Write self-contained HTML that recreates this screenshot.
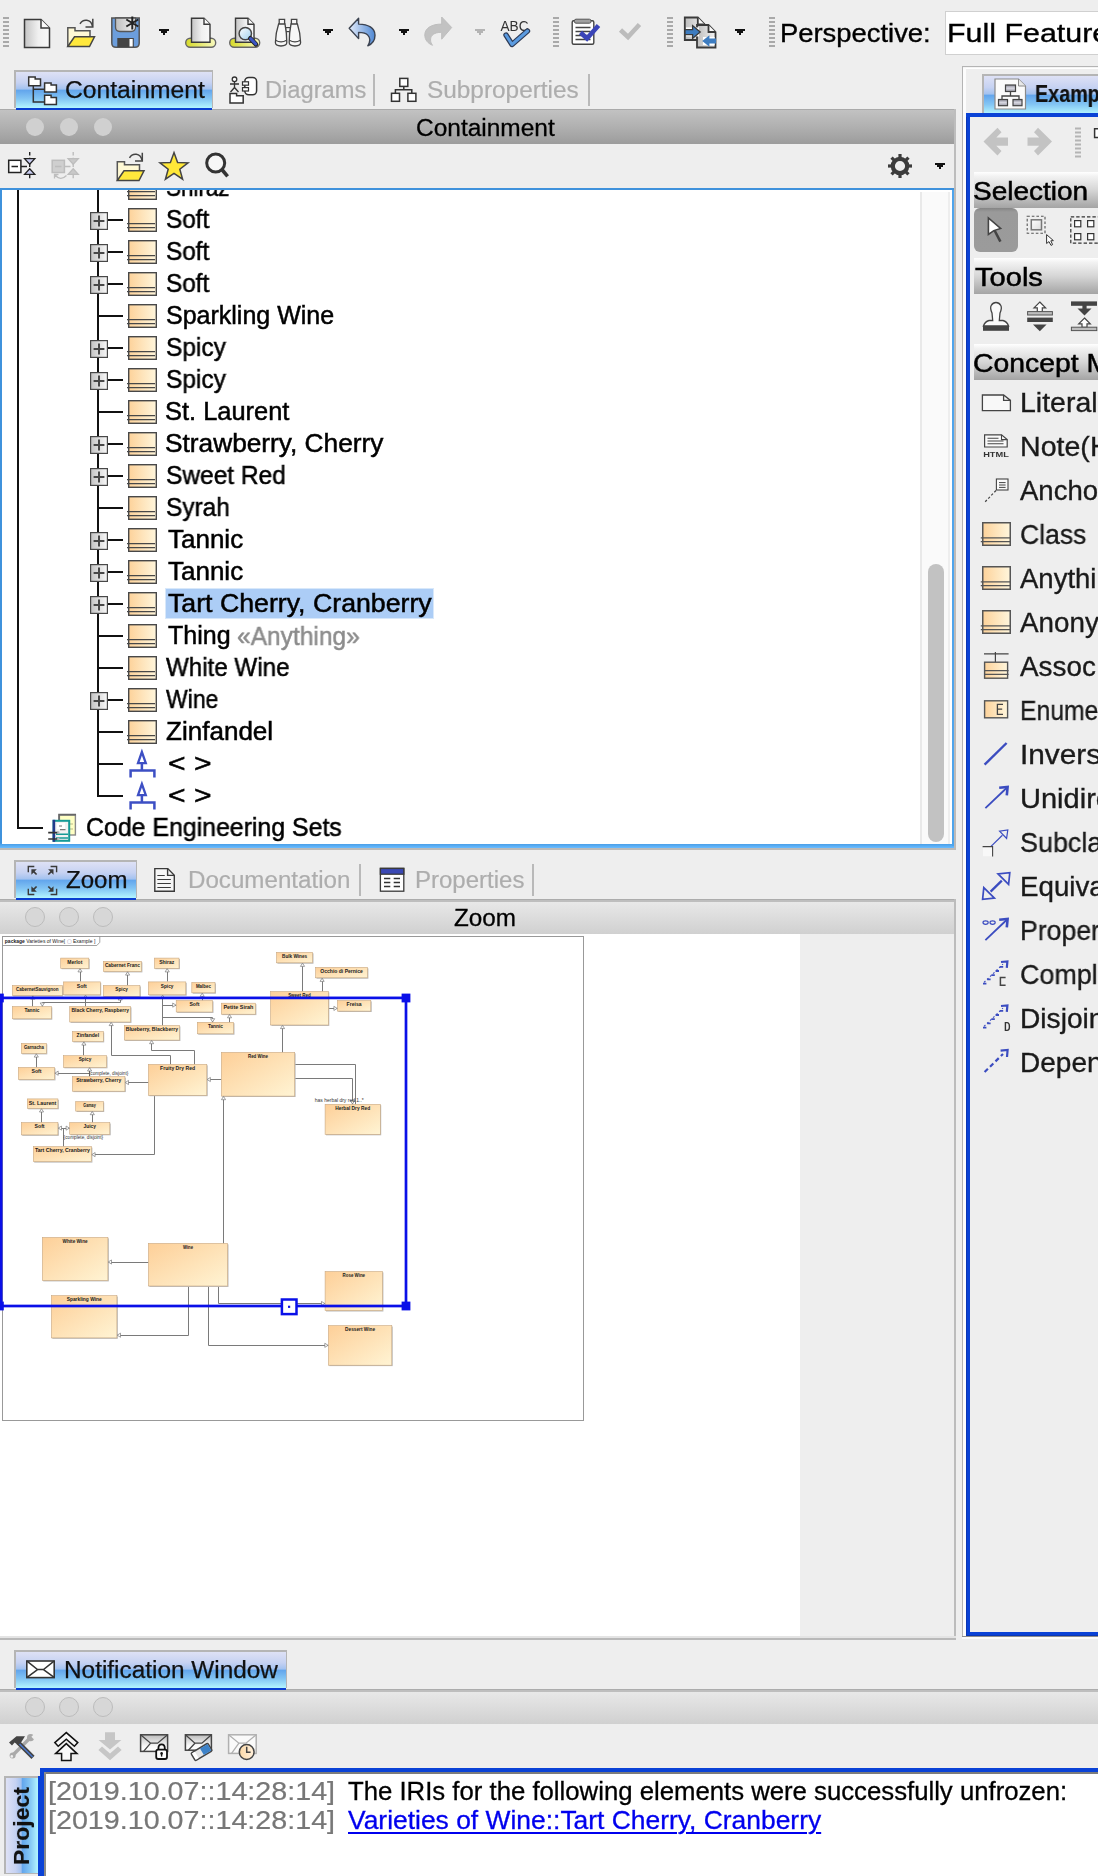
<!DOCTYPE html>
<html><head><meta charset="utf-8"><title>UI</title>
<style>
html,body{margin:0;padding:0;}
body{width:1098px;height:1876px;background:#eeeeee;position:relative;overflow:hidden;font-family:"Liberation Sans",sans-serif;}
.b{position:absolute;box-sizing:border-box;display:block;}
.t{position:absolute;white-space:pre;font-family:"Liberation Sans",sans-serif;-webkit-text-stroke:0.5px;transform-origin:0 0;will-change:transform;}
svg{overflow:visible;}
</style></head><body>
<div class="b" style="left:3px;top:17px;width:6px;height:2px;background:#a9a9a9;"></div>
<div class="b" style="left:3px;top:21px;width:6px;height:2px;background:#a9a9a9;"></div>
<div class="b" style="left:3px;top:25px;width:6px;height:2px;background:#a9a9a9;"></div>
<div class="b" style="left:3px;top:29px;width:6px;height:2px;background:#a9a9a9;"></div>
<div class="b" style="left:3px;top:33px;width:6px;height:2px;background:#a9a9a9;"></div>
<div class="b" style="left:3px;top:37px;width:6px;height:2px;background:#a9a9a9;"></div>
<div class="b" style="left:3px;top:41px;width:6px;height:2px;background:#a9a9a9;"></div>
<div class="b" style="left:3px;top:45px;width:6px;height:2px;background:#a9a9a9;"></div>
<div class="b" style="left:553px;top:17px;width:6px;height:2px;background:#a9a9a9;"></div>
<div class="b" style="left:553px;top:21px;width:6px;height:2px;background:#a9a9a9;"></div>
<div class="b" style="left:553px;top:25px;width:6px;height:2px;background:#a9a9a9;"></div>
<div class="b" style="left:553px;top:29px;width:6px;height:2px;background:#a9a9a9;"></div>
<div class="b" style="left:553px;top:33px;width:6px;height:2px;background:#a9a9a9;"></div>
<div class="b" style="left:553px;top:37px;width:6px;height:2px;background:#a9a9a9;"></div>
<div class="b" style="left:553px;top:41px;width:6px;height:2px;background:#a9a9a9;"></div>
<div class="b" style="left:553px;top:45px;width:6px;height:2px;background:#a9a9a9;"></div>
<div class="b" style="left:667px;top:17px;width:6px;height:2px;background:#a9a9a9;"></div>
<div class="b" style="left:667px;top:21px;width:6px;height:2px;background:#a9a9a9;"></div>
<div class="b" style="left:667px;top:25px;width:6px;height:2px;background:#a9a9a9;"></div>
<div class="b" style="left:667px;top:29px;width:6px;height:2px;background:#a9a9a9;"></div>
<div class="b" style="left:667px;top:33px;width:6px;height:2px;background:#a9a9a9;"></div>
<div class="b" style="left:667px;top:37px;width:6px;height:2px;background:#a9a9a9;"></div>
<div class="b" style="left:667px;top:41px;width:6px;height:2px;background:#a9a9a9;"></div>
<div class="b" style="left:667px;top:45px;width:6px;height:2px;background:#a9a9a9;"></div>
<div class="b" style="left:769px;top:17px;width:6px;height:2px;background:#a9a9a9;"></div>
<div class="b" style="left:769px;top:21px;width:6px;height:2px;background:#a9a9a9;"></div>
<div class="b" style="left:769px;top:25px;width:6px;height:2px;background:#a9a9a9;"></div>
<div class="b" style="left:769px;top:29px;width:6px;height:2px;background:#a9a9a9;"></div>
<div class="b" style="left:769px;top:33px;width:6px;height:2px;background:#a9a9a9;"></div>
<div class="b" style="left:769px;top:37px;width:6px;height:2px;background:#a9a9a9;"></div>
<div class="b" style="left:769px;top:41px;width:6px;height:2px;background:#a9a9a9;"></div>
<div class="b" style="left:769px;top:45px;width:6px;height:2px;background:#a9a9a9;"></div>
<div class="b" style="left:159px;top:29px;width:10px;height:2px;background:#111;"></div>
<div class="b" style="left:161px;top:31px;width:6px;height:2px;background:#111;"></div>
<div class="b" style="left:163px;top:33px;width:2px;height:2px;background:#111;"></div>
<div class="b" style="left:323px;top:29px;width:10px;height:2px;background:#111;"></div>
<div class="b" style="left:325px;top:31px;width:6px;height:2px;background:#111;"></div>
<div class="b" style="left:327px;top:33px;width:2px;height:2px;background:#111;"></div>
<div class="b" style="left:399px;top:29px;width:10px;height:2px;background:#111;"></div>
<div class="b" style="left:401px;top:31px;width:6px;height:2px;background:#111;"></div>
<div class="b" style="left:403px;top:33px;width:2px;height:2px;background:#111;"></div>
<div class="b" style="left:475px;top:29px;width:10px;height:2px;background:#b4b4b4;"></div>
<div class="b" style="left:477px;top:31px;width:6px;height:2px;background:#b4b4b4;"></div>
<div class="b" style="left:479px;top:33px;width:2px;height:2px;background:#b4b4b4;"></div>
<div class="b" style="left:735px;top:29px;width:10px;height:2px;background:#111;"></div>
<div class="b" style="left:737px;top:31px;width:6px;height:2px;background:#111;"></div>
<div class="b" style="left:739px;top:33px;width:2px;height:2px;background:#111;"></div>
<span class="t" style="left:779.68px;top:21px;font-size:25.3px;line-height:25.3px;color:#000;transform:scaleX(1.0827);-webkit-text-stroke:0.35px;">Perspective:</span>
<div class="b" style="left:944.5px;top:11px;width:160px;height:43.6px;background:#fff;border:1px solid #d0d0d0;"></div>
<span class="t" style="left:947.47px;top:21px;font-size:25.3px;line-height:25.3px;color:#000;transform:scaleX(1.2023);-webkit-text-stroke:0.35px;">Full Featured</span>
<div class="b" style="left:0px;top:109px;width:955px;height:1px;background:#aaaaaa;"></div>
<div class="b" style="left:0px;top:110px;width:955px;height:34px;background:linear-gradient(to bottom,#c2c2c2 0%,#b0b0b0 50%,#9c9c9c 100%);"></div>
<div class="b" style="left:14px;top:70px;width:199.4px;height:38px;background:#b5b5b5;"></div>
<div class="b" style="left:16px;top:72px;width:196.4px;height:36px;background:linear-gradient(to bottom,#dee1f5 0%,#c6d2f2 30%,#a3c2ef 47.5%,#62a5ec 50.5%,#84c6f4 75%,#b4f6ff 100%);"></div>
<div class="b" style="left:16px;top:108px;width:196.4px;height:2px;background:#0a3fd0;"></div>
<span class="t" style="left:65.01px;top:79px;font-size:23.5px;line-height:23.5px;color:#111;transform:scaleX(1.0488);-webkit-text-stroke:0.25px;">Containment</span>
<span class="t" style="left:265.34px;top:79px;font-size:23.5px;line-height:23.5px;color:#adadad;transform:scaleX(1.0079);-webkit-text-stroke:0.2px;">Diagrams</span>
<div class="b" style="left:373px;top:74px;width:2px;height:32px;background:#b9b9b9;"></div>
<span class="t" style="left:427.03px;top:79px;font-size:23.5px;line-height:23.5px;color:#adadad;transform:scaleX(1.0369);-webkit-text-stroke:0.2px;">Subproperties</span>
<div class="b" style="left:588px;top:74px;width:2px;height:32px;background:#b9b9b9;"></div>
<div class="b" style="left:26px;top:118px;width:18px;height:18px;background:#d0d0d0;border-radius:50%;"></div>
<div class="b" style="left:60px;top:118px;width:18px;height:18px;background:#d0d0d0;border-radius:50%;"></div>
<div class="b" style="left:94px;top:118px;width:18px;height:18px;background:#d0d0d0;border-radius:50%;"></div>
<span class="t" style="left:415.72px;top:117px;font-size:23.5px;line-height:23.5px;color:#000;transform:scaleX(1.0412);-webkit-text-stroke:0.3px;">Containment</span>
<div class="b" style="left:954px;top:109px;width:2px;height:740px;background:#bdbdbd;"></div>
<svg class="b" style="left:0;top:0" width="1098" height="200" viewBox="0 0 1098 200"><defs>
<linearGradient id="pgG" x1="0" x2="1" y1="0" y2="0"><stop offset="0" stop-color="#c4c4c4"/><stop offset="0.55" stop-color="#f0f0f0"/><stop offset="1" stop-color="#f8f8f8"/></linearGradient>
<linearGradient id="ylG" x1="0" x2="1" y1="0" y2="0"><stop offset="0" stop-color="#d6da28"/><stop offset="1" stop-color="#f8f9c0"/></linearGradient>
<linearGradient id="unG" x1="0" x2="1" y1="0" y2="0"><stop offset="0" stop-color="#e4ecfa"/><stop offset="1" stop-color="#4f88d4"/></linearGradient>
<linearGradient id="mgG" x1="0" x2="1" y1="0" y2="1"><stop offset="0" stop-color="#ffffff"/><stop offset="1" stop-color="#9fd0ee"/></linearGradient>
<linearGradient id="flG" x1="0" x2="1" y1="0" y2="0"><stop offset="0" stop-color="#bdbdbd"/><stop offset="1" stop-color="#f4f4f4"/></linearGradient>
</defs><path d="M24.5 19.5 H41.0 L49.5 28.0 V47.5 H24.5 Z" fill="url(#pgG)" stroke="#3a3a3a" stroke-width="1.5" stroke-linejoin="miter"/><path d="M41.0 19.5 V28.0 H49.5" fill="#fafafa" stroke="#3a3a3a" stroke-width="1.5" stroke-linejoin="miter"/><path d="M67.8 46.5 V27.8 H75 V30.8 H90 V36.8" fill="#fff9d4" stroke="#555" stroke-width="1.5"/><path d="M67.8 46.5 L74.5 36.8 H94.5 L89.5 46.5 Z" fill="#ffe83c" stroke="#444" stroke-width="1.5" stroke-linejoin="miter"/><path d="M80 23.8 C83 18.8 91 18.8 92.5 26.3" fill="none" stroke="#444" stroke-width="1.5"/><path d="M92.8 18.8 V27.1 H85.5" fill="none" stroke="#444" stroke-width="1.5"/><path d="M111.8 18 H139.2 V43 Q139.2 47.3 135 47.3 H116 Q111.8 47.3 111.8 43 Z" fill="#6c9edc" stroke="#555" stroke-width="1.5"/><path d="M115.5 18 H135.5 V27 Q135.5 31.5 131 31.5 H120 Q115.5 31.5 115.5 27 Z" fill="url(#flG)" stroke="#555" stroke-width="1.3"/><rect x="117.3" y="38" width="16.5" height="9" fill="#444"/><rect x="129.5" y="39" width="3.2" height="7.5" fill="#fff"/><path d="M132.3 16.5 V29.5 M126.3 19.5 L138.3 26.5 M138.3 19.5 L126.3 26.5" stroke="#222" stroke-width="2" fill="none"/><rect x="185.7" y="38.3" width="30" height="9" rx="4.5" fill="url(#ylG)" stroke="#666" stroke-width="1.4"/><path d="M191.5 18.3 H204.0 L210.0 24.3 V42.3 H191.5 Z" fill="url(#pgG)" stroke="#3a3a3a" stroke-width="1.4" stroke-linejoin="miter"/><path d="M204.0 18.3 V24.3 H210.0" fill="#fafafa" stroke="#3a3a3a" stroke-width="1.4" stroke-linejoin="miter"/><rect x="229.7" y="38.3" width="30" height="9" rx="4.5" fill="url(#ylG)" stroke="#666" stroke-width="1.4"/><path d="M235.5 18.3 H248.0 L254.0 24.3 V42.3 H235.5 Z" fill="url(#pgG)" stroke="#3a3a3a" stroke-width="1.4" stroke-linejoin="miter"/><path d="M248.0 18.3 V24.3 H254.0" fill="#fafafa" stroke="#3a3a3a" stroke-width="1.4" stroke-linejoin="miter"/><circle cx="245.3" cy="33.6" r="6.2" fill="url(#mgG)" stroke="#444" stroke-width="1.5"/><path d="M250.3 38.3 L256 44.3" stroke="#222" stroke-width="4.6" stroke-linecap="round"/><path d="M250.6 38.6 L255.8 44" stroke="#3b55c4" stroke-width="3" stroke-linecap="round"/><rect x="285.6" y="27.6" width="4.8" height="4" fill="#f7f7f7" stroke="#444" stroke-width="1.2"/><path d="M279.2 24 V19.4 H284.6 V24" fill="#f7f7f7" stroke="#444" stroke-width="1.3"/><path d="M278.6 24 H285 Q286.8 33 286.8 42.6 Q286.8 46 281 46 Q275.4 46 275.4 42.6 Q275.6 33 278.6 24 Z" fill="#f7f7f7" stroke="#444" stroke-width="1.3"/><path d="M275.6 40.2 Q281 43.6 286.6 40.2" fill="none" stroke="#444" stroke-width="1.2"/><path d="M296.8 24 V19.4 H291.4 V24" fill="#f7f7f7" stroke="#444" stroke-width="1.3"/><path d="M297.4 24 H291 Q289.2 33 289.2 42.6 Q289.2 46 295 46 Q300.6 46 300.6 42.6 Q300.4 33 297.4 24 Z" fill="#f7f7f7" stroke="#444" stroke-width="1.3"/><path d="M300.4 40.2 Q295 43.6 289.4 40.2" fill="none" stroke="#444" stroke-width="1.2"/><path d="M349.2 28.2 L358.6 18.2 V24.1 C368 24 375 28 375 35.2 C375 40 372 44 367.8 45.8 C370.2 42 370.4 38 368 35.4 C366 33 362 32.4 358.6 32.4 V38.6 Z" fill="url(#unG)" stroke="#3b4250" stroke-width="1.4" stroke-linejoin="round"/><path d="M451.7 27.5 L441.7 17 V24.1 C432 24 424.8 28 424.8 35 C424.8 40 428 43.5 432.5 45.3 C430 42 430 38 432 35.5 C434 33 438 32.3 441.7 32.3 V39.2 Z" fill="#c2c2c2" stroke="#bdbdbd" stroke-width="1"/><text x="500.5" y="31" font-family="Liberation Sans, sans-serif" font-size="14.5" fill="#333" textLength="28" lengthAdjust="spacingAndGlyphs">ABC</text><path d="M506 35 L512 44.5 L527.5 31" fill="none" stroke="#2d3a55" stroke-width="5.4" stroke-linejoin="round" stroke-linecap="round"/><path d="M506 35 L512 44.5 L527.5 31" fill="none" stroke="#5b9be0" stroke-width="3" stroke-linejoin="round" stroke-linecap="round"/><rect x="572.2" y="20.8" width="21.6" height="23.4" rx="1.5" fill="#fff" stroke="#444" stroke-width="1.4"/><rect x="574.4" y="19.2" width="16.6" height="4" rx="1.6" fill="#a0a0a0" stroke="#555" stroke-width="1"/><path d="M575.5 27.5 H590.5 M575.5 31.5 H590.5 M575.5 35.5 H590.5 M575.5 39.5 H590.5" stroke="#444" stroke-width="1.3"/><path d="M580.5 32.5 L587 38.5 L598.5 25.5" fill="none" stroke="#3a44b8" stroke-width="4.6"/><path d="M620.5 30 L628 37 L639.5 24.5" fill="none" stroke="#bcbcbc" stroke-width="4.6"/><path d="M684.8 17.5 H697.8 L704.8 24.5 V40.0 H684.8 Z" fill="url(#flG)" stroke="#3a3a3a" stroke-width="1.8" stroke-linejoin="miter"/><path d="M697.8 17.5 V24.5 H704.8" fill="#fafafa" stroke="#3a3a3a" stroke-width="1.8" stroke-linejoin="miter"/><path d="M697 25 H708.5 L715.5 32 V47.5 H697 Z" fill="url(#flG)" stroke="#3a3a3a" stroke-width="1.8" stroke-linejoin="miter"/><path d="M708.5 25 V32 H715.5" fill="#fafafa" stroke="#3a3a3a" stroke-width="1.8" stroke-linejoin="miter"/><rect x="686" y="27.4" width="13" height="9" fill="#fff"/><rect x="703" y="37" width="11.6" height="8" fill="#fff"/><path d="M685 29.6 H692.6 V25.6 L700.2 32 L692.6 38.4 V34.6 H685 Z" fill="#3d7cc0" stroke="#3a3a3a" stroke-width="1.3" stroke-linejoin="miter"/><path d="M716 38.6 H709.4 V35.2 L702.2 41 L709.4 46.8 V43.6 H716 Z" fill="#3d7cc0" stroke="none"/><path d="M33.3 86 V101.9 H44.3 M33.3 89.3 H44.3" fill="none" stroke="#333" stroke-width="1.5"/><path d="M28.7 85.7 V76.9 H35.19 V79.10000000000001 H40.5 V85.7 Z" fill="#fff" stroke="#333" stroke-width="1.5" stroke-linejoin="miter"/><path d="M44.6 92.10000000000001 V82.9 H51.09 V85.10000000000001 H56.400000000000006 V92.10000000000001 Z" fill="#fff" stroke="#333" stroke-width="1.5" stroke-linejoin="miter"/><path d="M44.6 104.4 V95.2 H51.09 V97.4 H56.400000000000006 V104.4 Z" fill="#fff" stroke="#333" stroke-width="1.5" stroke-linejoin="miter"/><rect x="244.8" y="77.4" width="11.8" height="17.4" rx="4" fill="#fff" stroke="#333" stroke-width="1.5"/><rect x="242.5" y="81.8" width="6" height="3.4" fill="#fff" stroke="#333" stroke-width="1.2"/><rect x="242.5" y="87.6" width="6" height="3.4" fill="#fff" stroke="#333" stroke-width="1.2"/><circle cx="234.5" cy="79.3" r="2.3" fill="#fff" stroke="#333" stroke-width="1.3"/><path d="M234.5 81.8 V87.5 M230 84 H239 M234.5 87.5 L230.5 92 M234.5 87.5 L238.5 92" fill="none" stroke="#333" stroke-width="1.3"/><path d="M230 103.0 V93.4 H236.6 V95.80000000000001 H243.2 V103.0 Z" fill="#fff" stroke="#333" stroke-width="1.5" stroke-linejoin="miter"/><path d="M403.8 86.5 V89.8 M395.4 93 V89.8 H411.8 V93" fill="none" stroke="#333" stroke-width="1.5"/><rect x="399.8" y="78.4" width="8" height="8" fill="#fff" stroke="#333" stroke-width="1.5"/><rect x="391.5" y="93.3" width="8" height="8" fill="#fff" stroke="#333" stroke-width="1.5"/><rect x="407.9" y="93.3" width="8" height="8" fill="#fff" stroke="#333" stroke-width="1.5"/><path d="M29.7 152 V180.5" stroke="#222" stroke-width="1.4" stroke-dasharray="3.5 2.2" fill="none"/><rect x="8.7" y="160.3" width="12.2" height="12.2" fill="#fff" stroke="#222" stroke-width="1.5"/><path d="M11.5 166.4 H18 M21 166.4 H27" stroke="#222" stroke-width="1.5"/><path d="M24.6 158.6 H34.8 L29.7 164.2 Z M24.6 174.3 H34.8 L29.7 168.7 Z" fill="#c8ccf0" stroke="#222" stroke-width="1.3" stroke-linejoin="miter"/><path d="M73.2 152 V180.5" stroke="#bdbdbd" stroke-width="1.4" stroke-dasharray="3.5 2.2" fill="none"/><rect x="52.2" y="160.3" width="12.2" height="12.2" fill="#cfcfcf" stroke="#bdbdbd" stroke-width="1.5"/><path d="M55.0 166.4 H61.5 M64.5 166.4 H70.5" stroke="#bdbdbd" stroke-width="1.5"/><path d="M68.1 158.6 H78.3 L73.2 164.2 Z M68.1 174.3 H78.3 L73.2 168.7 Z" fill="#c9c9c9" stroke="#bdbdbd" stroke-width="1.3" stroke-linejoin="miter"/><path d="M55.0 175 Q60.5 181.5 66.5 175.5 M54.5 178.5 V174.5 H58.5" fill="none" stroke="#bdbdbd" stroke-width="1.3"/><path d="M117.3 180.5 V161.8 H124.5 V164.8 H139.5 V170.8" fill="#fff9d4" stroke="#555" stroke-width="1.5"/><path d="M117.3 180.5 L124.0 170.8 H144.0 L139.0 180.5 Z" fill="#ffe83c" stroke="#444" stroke-width="1.5" stroke-linejoin="miter"/><path d="M129.5 157.8 C132.5 152.8 140.5 152.8 142.0 160.3" fill="none" stroke="#444" stroke-width="1.5"/><path d="M142.3 152.8 V161.10000000000002 H135.0" fill="none" stroke="#444" stroke-width="1.5"/><polygon points="174.0,152.6 177.6,162.4 188.0,162.8 179.8,169.2 182.6,179.2 174.0,173.4 165.4,179.2 168.2,169.2 160.0,162.8 170.4,162.4" fill="#ffe838" stroke="#444" stroke-width="1.5" stroke-linejoin="miter"/><circle cx="215.7" cy="163" r="9" fill="#f7f7f7" stroke="#333" stroke-width="3"/><path d="M222.3 170 L227.6 176.3" stroke="#333" stroke-width="3.6" stroke-linecap="butt"/><circle cx="900" cy="166" r="7.2" fill="none" stroke="#3c3c3c" stroke-width="4.2"/><rect x="898.4" y="154" width="3.2" height="4" fill="#3c3c3c" transform="rotate(0 900 166)"/><rect x="898.4" y="154" width="3.2" height="4" fill="#3c3c3c" transform="rotate(45 900 166)"/><rect x="898.4" y="154" width="3.2" height="4" fill="#3c3c3c" transform="rotate(90 900 166)"/><rect x="898.4" y="154" width="3.2" height="4" fill="#3c3c3c" transform="rotate(135 900 166)"/><rect x="898.4" y="154" width="3.2" height="4" fill="#3c3c3c" transform="rotate(180 900 166)"/><rect x="898.4" y="154" width="3.2" height="4" fill="#3c3c3c" transform="rotate(225 900 166)"/><rect x="898.4" y="154" width="3.2" height="4" fill="#3c3c3c" transform="rotate(270 900 166)"/><rect x="898.4" y="154" width="3.2" height="4" fill="#3c3c3c" transform="rotate(315 900 166)"/></svg>
<div class="b" style="left:935px;top:163px;width:10px;height:2px;background:#111;"></div>
<div class="b" style="left:937px;top:165px;width:6px;height:2px;background:#111;"></div>
<div class="b" style="left:939px;top:167px;width:2px;height:2px;background:#111;"></div>
<div class="b" style="left:0px;top:188px;width:956px;height:662px;background:#bcbab8;"></div>
<div class="b" style="left:0px;top:188px;width:954.2px;height:660px;background:linear-gradient(to bottom,#3f92dc 0,#3f92dc 655px,#4a9fe8 656px,#6abcff 660px);"></div>
<div class="b" style="left:952px;top:190px;width:2.2px;height:656px;background:#4ea4ec;"></div>
<div class="b" style="left:2px;top:190px;width:950px;height:654px;background:#fff;"></div>
<div class="b" style="left:920px;top:192px;width:30px;height:652px;background:#fafafa;"></div>
<div class="b" style="left:920px;top:192px;width:2px;height:652px;background:#e9e9e9;"></div>
<div class="b" style="left:948px;top:192px;width:2px;height:652px;background:#eeeeee;"></div>
<div class="b" style="left:928px;top:564px;width:16px;height:278px;background:#c2c2c2;border-radius:8px;"></div>
<div class="b" style="left:17px;top:190px;width:2.4px;height:638.8px;background:#111;"></div>
<div class="b" style="left:17px;top:826.5px;width:26px;height:2.3px;background:#111;"></div>
<div class="b" style="left:97px;top:190px;width:2px;height:607px;background:#111;"></div>
<svg width="0" height="0" style="position:absolute"><defs><linearGradient id="cg" x1="0" x2="1" y1="0" y2="0"><stop offset="0" stop-color="#fdd29a"/><stop offset="1" stop-color="#fff6dc"/></linearGradient></defs></svg>
<div class="b" style="left:2px;top:190px;width:918px;height:654px;overflow:hidden"><div style="position:absolute;left:-2px;top:-190px">
<div class="b" style="left:99px;top:187px;width:24px;height:2px;background:#111;"></div>
<svg class="b" style="left:127px;top:176px" width="31" height="24" viewBox="-1 0 31 24"><rect x="0.7" y="0.7" width="27.6" height="22.6" fill="url(#cg)" stroke="#484848" stroke-width="1.4"/><path d="M-1 15.6 H27 M-1 19.6 H27" stroke="#484848" stroke-width="1.3" fill="none"/></svg>
<span class="t" style="left:165.60px;top:175px;font-size:25px;line-height:25px;color:#000;transform:scaleX(0.8958);">Shiraz</span>
<div class="b" style="left:108px;top:219px;width:15px;height:2px;background:#111;"></div>
<svg class="b" style="left:127px;top:208px" width="31" height="24" viewBox="-1 0 31 24"><rect x="0.7" y="0.7" width="27.6" height="22.6" fill="url(#cg)" stroke="#484848" stroke-width="1.4"/><path d="M-1 15.6 H27 M-1 19.6 H27" stroke="#484848" stroke-width="1.3" fill="none"/></svg>
<span class="t" style="left:165.53px;top:207px;font-size:25px;line-height:25px;color:#000;transform:scaleX(0.9715);">Soft</span>
<div class="b" style="left:108px;top:251px;width:15px;height:2px;background:#111;"></div>
<svg class="b" style="left:127px;top:240px" width="31" height="24" viewBox="-1 0 31 24"><rect x="0.7" y="0.7" width="27.6" height="22.6" fill="url(#cg)" stroke="#484848" stroke-width="1.4"/><path d="M-1 15.6 H27 M-1 19.6 H27" stroke="#484848" stroke-width="1.3" fill="none"/></svg>
<span class="t" style="left:165.53px;top:239px;font-size:25px;line-height:25px;color:#000;transform:scaleX(0.9715);">Soft</span>
<div class="b" style="left:108px;top:283px;width:15px;height:2px;background:#111;"></div>
<svg class="b" style="left:127px;top:272px" width="31" height="24" viewBox="-1 0 31 24"><rect x="0.7" y="0.7" width="27.6" height="22.6" fill="url(#cg)" stroke="#484848" stroke-width="1.4"/><path d="M-1 15.6 H27 M-1 19.6 H27" stroke="#484848" stroke-width="1.3" fill="none"/></svg>
<span class="t" style="left:165.53px;top:271px;font-size:25px;line-height:25px;color:#000;transform:scaleX(0.9715);">Soft</span>
<div class="b" style="left:99px;top:315px;width:24px;height:2px;background:#111;"></div>
<svg class="b" style="left:127px;top:304px" width="31" height="24" viewBox="-1 0 31 24"><rect x="0.7" y="0.7" width="27.6" height="22.6" fill="url(#cg)" stroke="#484848" stroke-width="1.4"/><path d="M-1 15.6 H27 M-1 19.6 H27" stroke="#484848" stroke-width="1.3" fill="none"/></svg>
<span class="t" style="left:165.50px;top:303px;font-size:25px;line-height:25px;color:#000;">Sparkling Wine</span>
<div class="b" style="left:108px;top:347px;width:15px;height:2px;background:#111;"></div>
<svg class="b" style="left:127px;top:336px" width="31" height="24" viewBox="-1 0 31 24"><rect x="0.7" y="0.7" width="27.6" height="22.6" fill="url(#cg)" stroke="#484848" stroke-width="1.4"/><path d="M-1 15.6 H27 M-1 19.6 H27" stroke="#484848" stroke-width="1.3" fill="none"/></svg>
<span class="t" style="left:165.52px;top:335px;font-size:25px;line-height:25px;color:#000;transform:scaleX(0.9769);">Spicy</span>
<div class="b" style="left:108px;top:379px;width:15px;height:2px;background:#111;"></div>
<svg class="b" style="left:127px;top:368px" width="31" height="24" viewBox="-1 0 31 24"><rect x="0.7" y="0.7" width="27.6" height="22.6" fill="url(#cg)" stroke="#484848" stroke-width="1.4"/><path d="M-1 15.6 H27 M-1 19.6 H27" stroke="#484848" stroke-width="1.3" fill="none"/></svg>
<span class="t" style="left:165.52px;top:367px;font-size:25px;line-height:25px;color:#000;transform:scaleX(0.9769);">Spicy</span>
<div class="b" style="left:99px;top:411px;width:24px;height:2px;background:#111;"></div>
<svg class="b" style="left:127px;top:400px" width="31" height="24" viewBox="-1 0 31 24"><rect x="0.7" y="0.7" width="27.6" height="22.6" fill="url(#cg)" stroke="#484848" stroke-width="1.4"/><path d="M-1 15.6 H27 M-1 19.6 H27" stroke="#484848" stroke-width="1.3" fill="none"/></svg>
<span class="t" style="left:165.48px;top:399px;font-size:25px;line-height:25px;color:#000;transform:scaleX(1.0167);">St. Laurent</span>
<div class="b" style="left:108px;top:443px;width:15px;height:2px;background:#111;"></div>
<svg class="b" style="left:127px;top:432px" width="31" height="24" viewBox="-1 0 31 24"><rect x="0.7" y="0.7" width="27.6" height="22.6" fill="url(#cg)" stroke="#484848" stroke-width="1.4"/><path d="M-1 15.6 H27 M-1 19.6 H27" stroke="#484848" stroke-width="1.3" fill="none"/></svg>
<span class="t" style="left:165.45px;top:431px;font-size:25px;line-height:25px;color:#000;transform:scaleX(1.0506);">Strawberry, Cherry</span>
<div class="b" style="left:108px;top:475px;width:15px;height:2px;background:#111;"></div>
<svg class="b" style="left:127px;top:464px" width="31" height="24" viewBox="-1 0 31 24"><rect x="0.7" y="0.7" width="27.6" height="22.6" fill="url(#cg)" stroke="#484848" stroke-width="1.4"/><path d="M-1 15.6 H27 M-1 19.6 H27" stroke="#484848" stroke-width="1.3" fill="none"/></svg>
<span class="t" style="left:165.52px;top:463px;font-size:25px;line-height:25px;color:#000;transform:scaleX(0.9791);">Sweet Red</span>
<div class="b" style="left:99px;top:507px;width:24px;height:2px;background:#111;"></div>
<svg class="b" style="left:127px;top:496px" width="31" height="24" viewBox="-1 0 31 24"><rect x="0.7" y="0.7" width="27.6" height="22.6" fill="url(#cg)" stroke="#484848" stroke-width="1.4"/><path d="M-1 15.6 H27 M-1 19.6 H27" stroke="#484848" stroke-width="1.3" fill="none"/></svg>
<span class="t" style="left:165.52px;top:495px;font-size:25px;line-height:25px;color:#000;transform:scaleX(0.9757);">Syrah</span>
<div class="b" style="left:108px;top:539px;width:15px;height:2px;background:#111;"></div>
<svg class="b" style="left:127px;top:528px" width="31" height="24" viewBox="-1 0 31 24"><rect x="0.7" y="0.7" width="27.6" height="22.6" fill="url(#cg)" stroke="#484848" stroke-width="1.4"/><path d="M-1 15.6 H27 M-1 19.6 H27" stroke="#484848" stroke-width="1.3" fill="none"/></svg>
<span class="t" style="left:167.74px;top:527px;font-size:25px;line-height:25px;color:#000;transform:scaleX(1.0398);">Tannic</span>
<div class="b" style="left:108px;top:571px;width:15px;height:2px;background:#111;"></div>
<svg class="b" style="left:127px;top:560px" width="31" height="24" viewBox="-1 0 31 24"><rect x="0.7" y="0.7" width="27.6" height="22.6" fill="url(#cg)" stroke="#484848" stroke-width="1.4"/><path d="M-1 15.6 H27 M-1 19.6 H27" stroke="#484848" stroke-width="1.3" fill="none"/></svg>
<span class="t" style="left:167.74px;top:559px;font-size:25px;line-height:25px;color:#000;transform:scaleX(1.0398);">Tannic</span>
<div class="b" style="left:108px;top:603px;width:15px;height:2px;background:#111;"></div>
<svg class="b" style="left:127px;top:592px" width="31" height="24" viewBox="-1 0 31 24"><rect x="0.7" y="0.7" width="27.6" height="22.6" fill="url(#cg)" stroke="#484848" stroke-width="1.4"/><path d="M-1 15.6 H27 M-1 19.6 H27" stroke="#484848" stroke-width="1.3" fill="none"/></svg>
<div class="b" style="left:165px;top:588px;width:269px;height:31px;background:#accdf6;border:1px solid #d8e8fa;"></div>
<span class="t" style="left:167.73px;top:591px;font-size:25px;line-height:25px;color:#000;transform:scaleX(1.0684);">Tart Cherry, Cranberry</span>
<div class="b" style="left:99px;top:635px;width:24px;height:2px;background:#111;"></div>
<svg class="b" style="left:127px;top:624px" width="31" height="24" viewBox="-1 0 31 24"><rect x="0.7" y="0.7" width="27.6" height="22.6" fill="url(#cg)" stroke="#484848" stroke-width="1.4"/><path d="M-1 15.6 H27 M-1 19.6 H27" stroke="#484848" stroke-width="1.3" fill="none"/></svg>
<span class="t" style="left:167.75px;top:623px;font-size:25px;line-height:25px;color:#000;">Thing</span>
<span class="t" style="left:237.02px;top:624px;font-size:25px;line-height:25px;color:#8c8c8c;transform:scaleX(0.9811);">«Anything»</span>
<div class="b" style="left:99px;top:667px;width:24px;height:2px;background:#111;"></div>
<svg class="b" style="left:127px;top:656px" width="31" height="24" viewBox="-1 0 31 24"><rect x="0.7" y="0.7" width="27.6" height="22.6" fill="url(#cg)" stroke="#484848" stroke-width="1.4"/><path d="M-1 15.6 H27 M-1 19.6 H27" stroke="#484848" stroke-width="1.3" fill="none"/></svg>
<span class="t" style="left:166.26px;top:655px;font-size:25px;line-height:25px;color:#000;transform:scaleX(0.9661);">White Wine</span>
<div class="b" style="left:108px;top:699px;width:15px;height:2px;background:#111;"></div>
<svg class="b" style="left:127px;top:688px" width="31" height="24" viewBox="-1 0 31 24"><rect x="0.7" y="0.7" width="27.6" height="22.6" fill="url(#cg)" stroke="#484848" stroke-width="1.4"/><path d="M-1 15.6 H27 M-1 19.6 H27" stroke="#484848" stroke-width="1.3" fill="none"/></svg>
<span class="t" style="left:166.27px;top:687px;font-size:25px;line-height:25px;color:#000;transform:scaleX(0.9192);">Wine</span>
<div class="b" style="left:99px;top:731px;width:24px;height:2px;background:#111;"></div>
<svg class="b" style="left:127px;top:720px" width="31" height="24" viewBox="-1 0 31 24"><rect x="0.7" y="0.7" width="27.6" height="22.6" fill="url(#cg)" stroke="#484848" stroke-width="1.4"/><path d="M-1 15.6 H27 M-1 19.6 H27" stroke="#484848" stroke-width="1.3" fill="none"/></svg>
<span class="t" style="left:166.24px;top:719px;font-size:25px;line-height:25px;color:#000;transform:scaleX(1.0417);">Zinfandel</span>
<div class="b" style="left:99px;top:763px;width:24px;height:2px;background:#111;"></div>
<svg class="b" style="left:127px;top:748px" width="32" height="32" viewBox="0 0 32 32"><path d="M14.9 4 L11 15.2 H18.8 Z" fill="#fff" stroke="#3d4fc4" stroke-width="2.3" stroke-linejoin="miter"/><path d="M14.9 16 V23.6 M3.6 29.4 V22.4 H27.4 V29.4" fill="none" stroke="#3d4fc4" stroke-width="2.5"/></svg>
<span class="t" style="left:167.70px;top:751px;font-size:25px;line-height:25px;color:#000;transform:scaleX(1.2033);">&lt; &gt;</span>
<div class="b" style="left:99px;top:795px;width:24px;height:2px;background:#111;"></div>
<svg class="b" style="left:127px;top:780px" width="32" height="32" viewBox="0 0 32 32"><path d="M14.9 4 L11 15.2 H18.8 Z" fill="#fff" stroke="#3d4fc4" stroke-width="2.3" stroke-linejoin="miter"/><path d="M14.9 16 V23.6 M3.6 29.4 V22.4 H27.4 V29.4" fill="none" stroke="#3d4fc4" stroke-width="2.5"/></svg>
<span class="t" style="left:167.70px;top:783px;font-size:25px;line-height:25px;color:#000;transform:scaleX(1.2033);">&lt; &gt;</span>
<svg class="b" style="left:90px;top:212px" width="18" height="18" viewBox="0 0 18 18"><defs><linearGradient id="pg" x1="0" x2="1" y1="0" y2="0"><stop offset="0" stop-color="#c4c4c4"/><stop offset="1" stop-color="#f8f8f8"/></linearGradient></defs><rect x="0.6" y="0.6" width="16.8" height="16.8" fill="url(#pg)" stroke="#484848" stroke-width="1.2"/><path d="M3.6 9 H14.4 M9 3.6 V14.4" stroke="#484848" stroke-width="2"/></svg>
<svg class="b" style="left:90px;top:244px" width="18" height="18" viewBox="0 0 18 18"><defs><linearGradient id="pg" x1="0" x2="1" y1="0" y2="0"><stop offset="0" stop-color="#c4c4c4"/><stop offset="1" stop-color="#f8f8f8"/></linearGradient></defs><rect x="0.6" y="0.6" width="16.8" height="16.8" fill="url(#pg)" stroke="#484848" stroke-width="1.2"/><path d="M3.6 9 H14.4 M9 3.6 V14.4" stroke="#484848" stroke-width="2"/></svg>
<svg class="b" style="left:90px;top:276px" width="18" height="18" viewBox="0 0 18 18"><defs><linearGradient id="pg" x1="0" x2="1" y1="0" y2="0"><stop offset="0" stop-color="#c4c4c4"/><stop offset="1" stop-color="#f8f8f8"/></linearGradient></defs><rect x="0.6" y="0.6" width="16.8" height="16.8" fill="url(#pg)" stroke="#484848" stroke-width="1.2"/><path d="M3.6 9 H14.4 M9 3.6 V14.4" stroke="#484848" stroke-width="2"/></svg>
<svg class="b" style="left:90px;top:340px" width="18" height="18" viewBox="0 0 18 18"><defs><linearGradient id="pg" x1="0" x2="1" y1="0" y2="0"><stop offset="0" stop-color="#c4c4c4"/><stop offset="1" stop-color="#f8f8f8"/></linearGradient></defs><rect x="0.6" y="0.6" width="16.8" height="16.8" fill="url(#pg)" stroke="#484848" stroke-width="1.2"/><path d="M3.6 9 H14.4 M9 3.6 V14.4" stroke="#484848" stroke-width="2"/></svg>
<svg class="b" style="left:90px;top:372px" width="18" height="18" viewBox="0 0 18 18"><defs><linearGradient id="pg" x1="0" x2="1" y1="0" y2="0"><stop offset="0" stop-color="#c4c4c4"/><stop offset="1" stop-color="#f8f8f8"/></linearGradient></defs><rect x="0.6" y="0.6" width="16.8" height="16.8" fill="url(#pg)" stroke="#484848" stroke-width="1.2"/><path d="M3.6 9 H14.4 M9 3.6 V14.4" stroke="#484848" stroke-width="2"/></svg>
<svg class="b" style="left:90px;top:436px" width="18" height="18" viewBox="0 0 18 18"><defs><linearGradient id="pg" x1="0" x2="1" y1="0" y2="0"><stop offset="0" stop-color="#c4c4c4"/><stop offset="1" stop-color="#f8f8f8"/></linearGradient></defs><rect x="0.6" y="0.6" width="16.8" height="16.8" fill="url(#pg)" stroke="#484848" stroke-width="1.2"/><path d="M3.6 9 H14.4 M9 3.6 V14.4" stroke="#484848" stroke-width="2"/></svg>
<svg class="b" style="left:90px;top:468px" width="18" height="18" viewBox="0 0 18 18"><defs><linearGradient id="pg" x1="0" x2="1" y1="0" y2="0"><stop offset="0" stop-color="#c4c4c4"/><stop offset="1" stop-color="#f8f8f8"/></linearGradient></defs><rect x="0.6" y="0.6" width="16.8" height="16.8" fill="url(#pg)" stroke="#484848" stroke-width="1.2"/><path d="M3.6 9 H14.4 M9 3.6 V14.4" stroke="#484848" stroke-width="2"/></svg>
<svg class="b" style="left:90px;top:532px" width="18" height="18" viewBox="0 0 18 18"><defs><linearGradient id="pg" x1="0" x2="1" y1="0" y2="0"><stop offset="0" stop-color="#c4c4c4"/><stop offset="1" stop-color="#f8f8f8"/></linearGradient></defs><rect x="0.6" y="0.6" width="16.8" height="16.8" fill="url(#pg)" stroke="#484848" stroke-width="1.2"/><path d="M3.6 9 H14.4 M9 3.6 V14.4" stroke="#484848" stroke-width="2"/></svg>
<svg class="b" style="left:90px;top:564px" width="18" height="18" viewBox="0 0 18 18"><defs><linearGradient id="pg" x1="0" x2="1" y1="0" y2="0"><stop offset="0" stop-color="#c4c4c4"/><stop offset="1" stop-color="#f8f8f8"/></linearGradient></defs><rect x="0.6" y="0.6" width="16.8" height="16.8" fill="url(#pg)" stroke="#484848" stroke-width="1.2"/><path d="M3.6 9 H14.4 M9 3.6 V14.4" stroke="#484848" stroke-width="2"/></svg>
<svg class="b" style="left:90px;top:596px" width="18" height="18" viewBox="0 0 18 18"><defs><linearGradient id="pg" x1="0" x2="1" y1="0" y2="0"><stop offset="0" stop-color="#c4c4c4"/><stop offset="1" stop-color="#f8f8f8"/></linearGradient></defs><rect x="0.6" y="0.6" width="16.8" height="16.8" fill="url(#pg)" stroke="#484848" stroke-width="1.2"/><path d="M3.6 9 H14.4 M9 3.6 V14.4" stroke="#484848" stroke-width="2"/></svg>
<svg class="b" style="left:90px;top:692px" width="18" height="18" viewBox="0 0 18 18"><defs><linearGradient id="pg" x1="0" x2="1" y1="0" y2="0"><stop offset="0" stop-color="#c4c4c4"/><stop offset="1" stop-color="#f8f8f8"/></linearGradient></defs><rect x="0.6" y="0.6" width="16.8" height="16.8" fill="url(#pg)" stroke="#484848" stroke-width="1.2"/><path d="M3.6 9 H14.4 M9 3.6 V14.4" stroke="#484848" stroke-width="2"/></svg>
</div></div>
<span class="t" style="left:86.01px;top:815px;font-size:25px;line-height:25px;color:#000;transform:scaleX(0.9948);">Code Engineering Sets</span>
<svg class="b" style="left:46px;top:812px" width="34" height="32" viewBox="46 812 34 32"><rect x="59.4" y="815" width="16" height="20" fill="#ffffc4" stroke="#8a8a8a" stroke-width="1.4"/><path d="M59 836 V814.6 H76" fill="none" stroke="#666" stroke-width="1.6"/><path d="M70 824 H73 M70 829 H73" stroke="#b9b98a" stroke-width="1.2"/><rect x="53.6" y="820.8" width="15.6" height="20" fill="#f2f2f2" stroke="#159a96" stroke-width="2"/><rect x="52.6" y="819.8" width="2.6" height="22" fill="#223a8a"/><rect x="57" y="823" width="8" height="6" fill="#fff"/><path d="M59 826 H62 M60 829.6 H65.5" stroke="#777" stroke-width="1.2"/><path d="M56 834.2 H68 M56 838 H68" stroke="#159a96" stroke-width="1.6"/><path d="M48.2 832.6 H58.5 M48.2 839 H58.5" stroke="#333" stroke-width="1.6"/><rect x="57.2" y="831.4" width="2.2" height="2.4" fill="#bbb"/><rect x="57.2" y="837.8" width="2.2" height="2.4" fill="#bbb"/></svg>
<div class="b" style="left:0px;top:899px;width:956px;height:1px;background:#acacac;"></div>
<div class="b" style="left:0px;top:900px;width:956px;height:2px;background:#bebebe;"></div>
<div class="b" style="left:0px;top:902px;width:954px;height:32px;background:linear-gradient(to bottom,#e8e8e8 0%,#dcdcdc 50%,#d0d0d0 100%);"></div>
<div class="b" style="left:954px;top:899px;width:2px;height:739px;background:#bcbcbc;"></div>
<div class="b" style="left:25px;top:907px;width:20px;height:20px;background:#d7d7d7;border-radius:50%;border:1px solid #bcbcbc;"></div>
<div class="b" style="left:59px;top:907px;width:20px;height:20px;background:#d7d7d7;border-radius:50%;border:1px solid #bcbcbc;"></div>
<div class="b" style="left:93px;top:907px;width:20px;height:20px;background:#d7d7d7;border-radius:50%;border:1px solid #bcbcbc;"></div>
<span class="t" style="left:454.26px;top:907px;font-size:23.5px;line-height:23.5px;color:#000;transform:scaleX(1.0317);-webkit-text-stroke:0.3px;">Zoom</span>
<div class="b" style="left:14px;top:860px;width:123px;height:38px;background:#b5b5b5;"></div>
<div class="b" style="left:16px;top:862px;width:120px;height:36px;background:linear-gradient(to bottom,#dee1f5 0%,#c6d2f2 30%,#a3c2ef 47.5%,#62a5ec 50.5%,#84c6f4 75%,#b4f6ff 100%);"></div>
<div class="b" style="left:16px;top:898px;width:120px;height:2px;background:#0a3fd0;"></div>
<span class="t" style="left:66.46px;top:869px;font-size:23.5px;line-height:23.5px;color:#111;transform:scaleX(1.0231);-webkit-text-stroke:0.25px;">Zoom</span>
<span class="t" style="left:188.31px;top:869px;font-size:23.5px;line-height:23.5px;color:#adadad;transform:scaleX(1.0275);-webkit-text-stroke:0.2px;">Documentation</span>
<div class="b" style="left:359px;top:864px;width:2px;height:32px;background:#b9b9b9;"></div>
<span class="t" style="left:414.82px;top:869px;font-size:23.5px;line-height:23.5px;color:#adadad;transform:scaleX(1.0214);-webkit-text-stroke:0.2px;">Properties</span>
<div class="b" style="left:532px;top:864px;width:2px;height:32px;background:#b9b9b9;"></div>
<div class="b" style="left:0px;top:934px;width:800px;height:702px;background:#fff;"></div>
<div class="b" style="left:0px;top:1636px;width:956px;height:2px;background:#e4e4e4;"></div>
<div class="b" style="left:0px;top:1638px;width:956px;height:1.7px;background:#b9b9b9;"></div>
<svg class="b" style="left:0;top:0" width="1098" height="1000" viewBox="0 0 1098 1000"><path d="M34.3 866.5 H28.3 V872.3" fill="none" stroke="#3a3a3a" stroke-width="1.4"/><path d="M31.400000000000002 869.3 H36.800000000000004 L31.400000000000002 874.6999999999999 Z" fill="#3a3a3a"/><path d="M32.900000000000006 870.8 L36.6 874.5" stroke="#3a3a3a" stroke-width="1.7"/><path d="M50.6 866.5 H56.6 V872.3" fill="none" stroke="#3a3a3a" stroke-width="1.4"/><path d="M53.5 869.3 H48.1 L53.5 874.6999999999999 Z" fill="#3a3a3a"/><path d="M52.0 870.8 L48.3 874.5" stroke="#3a3a3a" stroke-width="1.7"/><path d="M34.3 894.5 H28.3 V888.7" fill="none" stroke="#3a3a3a" stroke-width="1.4"/><path d="M31.400000000000002 891.7 H36.800000000000004 L31.400000000000002 886.3000000000001 Z" fill="#3a3a3a"/><path d="M32.900000000000006 890.2 L36.6 886.5" stroke="#3a3a3a" stroke-width="1.7"/><path d="M50.6 894.5 H56.6 V888.7" fill="none" stroke="#3a3a3a" stroke-width="1.4"/><path d="M53.5 891.7 H48.1 L53.5 886.3000000000001 Z" fill="#3a3a3a"/><path d="M52.0 890.2 L48.3 886.5" stroke="#3a3a3a" stroke-width="1.7"/><path d="M154.8 868.6 H167.8 L174.3 875.2 V891.2 H154.8 Z" fill="#f6f6f6" stroke="#3a3a3a" stroke-width="1.4" stroke-linejoin="miter"/><path d="M167.6 868.8 V875.4 H174" fill="none" stroke="#3a3a3a" stroke-width="1.4"/><path d="M157.8 875.5 H164.3 M157.8 879.5 H170.4 M157.8 883.5 H170.4 M157.8 887.5 H170.4" stroke="#3a3a3a" stroke-width="1.2" stroke-linecap="round"/><rect x="380.4" y="868.4" width="23.4" height="22.8" fill="#fff" stroke="#3a3a3a" stroke-width="1.3"/><rect x="380.4" y="868.4" width="23.4" height="5.8" fill="#3a48b4" stroke="#3a3a3a" stroke-width="1.3"/><path d="M384 878.5 H390.3 M393.7 878.5 H400 M384 882.5 H390.3 M393.7 882.5 H400 M384 886.5 H390.3 M393.7 886.5 H400" stroke="#333" stroke-width="1.4"/></svg>
<svg class="b" style="left:0;top:0" width="800" height="1640" viewBox="0 0 800 1640"><defs><linearGradient id="dg" x1="0" x2="1" y1="0" y2="1"><stop offset="0" stop-color="#fdcf98"/><stop offset="1" stop-color="#fff4d4"/></linearGradient></defs><rect x="2.5" y="936.5" width="581" height="484" fill="#fff" stroke="#999" stroke-width="1"/><path d="M2.5 945.5 H96.8 L99.8 942.3 V936.5" fill="none" stroke="#8a8a8a" stroke-width="0.8"/><text x="4.8" y="942.8" font-family="Liberation Sans, sans-serif" font-size="5" fill="#222" textLength="90.5" lengthAdjust="spacingAndGlyphs"><tspan font-weight="bold">package</tspan> Varieties of Wine[ <tspan fill="#88a">&#9634;</tspan> Example ]</text><path d="M80.5 968.5 V981.5" fill="none" stroke="#7a7a7a" stroke-width="1"/><path d="M127.5 971.5 V985.5" fill="none" stroke="#7a7a7a" stroke-width="1"/><path d="M167.5 968.5 V981.5" fill="none" stroke="#7a7a7a" stroke-width="1"/><path d="M202.5 992.5 V1000.5" fill="none" stroke="#7a7a7a" stroke-width="1"/><path d="M302.5 962.5 V991.5" fill="none" stroke="#7a7a7a" stroke-width="1"/><path d="M322.5 977.5 V991.5" fill="none" stroke="#7a7a7a" stroke-width="1"/><path d="M328.5 1008.5 H337.5" fill="none" stroke="#7a7a7a" stroke-width="1"/><path d="M282.5 1024.5 V1052.5" fill="none" stroke="#7a7a7a" stroke-width="1"/><path d="M32.5 995.5 V1006.5" fill="none" stroke="#7a7a7a" stroke-width="1"/><path d="M85.5 994.5 V1006.5" fill="none" stroke="#7a7a7a" stroke-width="1"/><path d="M42.5 1006.5 V1002.5 H120.5 V996.5" fill="none" stroke="#7a7a7a" stroke-width="1"/><path d="M162.5 994.5 V1025.5 M162.5 1005.5 H176.5 M162.5 1017.5 H212.5 V1022.5" fill="none" stroke="#7a7a7a" stroke-width="1"/><path d="M229.5 1014.5 V1022.5" fill="none" stroke="#7a7a7a" stroke-width="1"/><path d="M111.5 1022.5 V1055.5 H170.5 V1064.5" fill="none" stroke="#7a7a7a" stroke-width="1"/><path d="M151.5 1040.5 V1050.5 H194.5 V1064.5" fill="none" stroke="#7a7a7a" stroke-width="1"/><path d="M83.5 1041.5 V1055.5" fill="none" stroke="#7a7a7a" stroke-width="1"/><path d="M36.5 1053.5 V1067.5" fill="none" stroke="#7a7a7a" stroke-width="1"/><path d="M54.5 1073.5 H89.5 M89.5 1067.5 V1076.5" fill="none" stroke="#7a7a7a" stroke-width="1"/><path d="M124.5 1082.5 H148.5" fill="none" stroke="#7a7a7a" stroke-width="1"/><path d="M206.5 1079.5 H221.5" fill="none" stroke="#7a7a7a" stroke-width="1"/><path d="M294.5 1064.5 H355.5 V1104.5 M294.5 1078.5 H352.5 V1104.5" fill="none" stroke="#7a7a7a" stroke-width="1"/><path d="M223.5 1096.5 V1243.5" fill="none" stroke="#7a7a7a" stroke-width="1"/><path d="M41.5 1108.5 V1122.5" fill="none" stroke="#7a7a7a" stroke-width="1"/><path d="M92.5 1111.5 V1122.5" fill="none" stroke="#7a7a7a" stroke-width="1"/><path d="M57.5 1128.5 H69.5 M63.5 1128.5 V1146.5" fill="none" stroke="#7a7a7a" stroke-width="1"/><path d="M154.5 1095.5 V1154.5 H91.5" fill="none" stroke="#7a7a7a" stroke-width="1"/><path d="M107.5 1262.5 H148.5" fill="none" stroke="#7a7a7a" stroke-width="1"/><path d="M188.5 1286.5 V1335.5 H116.5" fill="none" stroke="#7a7a7a" stroke-width="1"/><path d="M208.5 1286.5 V1345.5 H328.5" fill="none" stroke="#7a7a7a" stroke-width="1"/><path d="M218.5 1286.5 V1303.5 H325.5" fill="none" stroke="#7a7a7a" stroke-width="1"/><rect x="61.6" y="959.0" width="28.1" height="10.2" fill="#b9b9b9"/><rect x="60.7" y="958.1" width="28.1" height="10.2" fill="url(#dg)" stroke="#c9a882" stroke-width="0.6"/><text x="74.8" y="963.7" text-anchor="middle" font-family="Liberation Sans, sans-serif" font-weight="bold" font-size="5" fill="#1a1a1a" textLength="15.0" lengthAdjust="spacingAndGlyphs">Merlot</text><rect x="104.2" y="962.3" width="38.2" height="10.1" fill="#b9b9b9"/><rect x="103.3" y="961.4" width="38.2" height="10.1" fill="url(#dg)" stroke="#c9a882" stroke-width="0.6"/><text x="122.4" y="967.0" text-anchor="middle" font-family="Liberation Sans, sans-serif" font-weight="bold" font-size="5" fill="#1a1a1a" textLength="35.0" lengthAdjust="spacingAndGlyphs">Cabernet Franc</text><rect x="155.3" y="959.0" width="24.6" height="10.2" fill="#b9b9b9"/><rect x="154.4" y="958.1" width="24.6" height="10.2" fill="url(#dg)" stroke="#c9a882" stroke-width="0.6"/><text x="166.7" y="963.7" text-anchor="middle" font-family="Liberation Sans, sans-serif" font-weight="bold" font-size="5" fill="#1a1a1a" textLength="15.0" lengthAdjust="spacingAndGlyphs">Shiraz</text><rect x="277.4" y="953.3" width="36.1" height="10.4" fill="#b9b9b9"/><rect x="276.5" y="952.4" width="36.1" height="10.4" fill="url(#dg)" stroke="#c9a882" stroke-width="0.6"/><text x="294.6" y="958.0" text-anchor="middle" font-family="Liberation Sans, sans-serif" font-weight="bold" font-size="5" fill="#1a1a1a" textLength="25.0" lengthAdjust="spacingAndGlyphs">Bulk Wines</text><rect x="316.5" y="968.3" width="51.9" height="10.4" fill="#b9b9b9"/><rect x="315.6" y="967.4" width="51.9" height="10.4" fill="url(#dg)" stroke="#c9a882" stroke-width="0.6"/><text x="341.6" y="973.0" text-anchor="middle" font-family="Liberation Sans, sans-serif" font-weight="bold" font-size="5" fill="#1a1a1a" textLength="42.5" lengthAdjust="spacingAndGlyphs">Occhio di Pernice</text><rect x="13.2" y="986.4" width="50.0" height="10.1" fill="#b9b9b9"/><rect x="12.3" y="985.5" width="50.0" height="10.1" fill="url(#dg)" stroke="#c9a882" stroke-width="0.6"/><text x="37.3" y="991.1" text-anchor="middle" font-family="Liberation Sans, sans-serif" font-weight="bold" font-size="5" fill="#1a1a1a" textLength="42.5" lengthAdjust="spacingAndGlyphs">CabernetSauvignon</text><rect x="64.3" y="982.8" width="36.9" height="12.9" fill="#b9b9b9"/><rect x="63.4" y="981.9" width="36.9" height="12.9" fill="url(#dg)" stroke="#c9a882" stroke-width="0.6"/><text x="81.8" y="987.5" text-anchor="middle" font-family="Liberation Sans, sans-serif" font-weight="bold" font-size="5" fill="#1a1a1a" textLength="10.0" lengthAdjust="spacingAndGlyphs">Soft</text><rect x="104.2" y="986.4" width="36.6" height="10.9" fill="#b9b9b9"/><rect x="103.3" y="985.5" width="36.6" height="10.9" fill="url(#dg)" stroke="#c9a882" stroke-width="0.6"/><text x="121.6" y="991.1" text-anchor="middle" font-family="Liberation Sans, sans-serif" font-weight="bold" font-size="5" fill="#1a1a1a" textLength="12.5" lengthAdjust="spacingAndGlyphs">Spicy</text><rect x="149.3" y="982.8" width="37.4" height="12.9" fill="#b9b9b9"/><rect x="148.4" y="981.9" width="37.4" height="12.9" fill="url(#dg)" stroke="#c9a882" stroke-width="0.6"/><text x="167.1" y="987.5" text-anchor="middle" font-family="Liberation Sans, sans-serif" font-weight="bold" font-size="5" fill="#1a1a1a" textLength="12.5" lengthAdjust="spacingAndGlyphs">Spicy</text><rect x="192.7" y="983.4" width="23.2" height="10.3" fill="#b9b9b9"/><rect x="191.8" y="982.5" width="23.2" height="10.3" fill="url(#dg)" stroke="#c9a882" stroke-width="0.6"/><text x="203.4" y="988.1" text-anchor="middle" font-family="Liberation Sans, sans-serif" font-weight="bold" font-size="5" fill="#1a1a1a" textLength="15.0" lengthAdjust="spacingAndGlyphs">Malbec</text><rect x="271.4" y="992.4" width="57.9" height="33.5" fill="#b9b9b9"/><rect x="270.5" y="991.5" width="57.9" height="33.5" fill="url(#dg)" stroke="#c9a882" stroke-width="0.6"/><text x="299.4" y="997.1" text-anchor="middle" font-family="Liberation Sans, sans-serif" font-weight="bold" font-size="5" fill="#1a1a1a" textLength="22.5" lengthAdjust="spacingAndGlyphs">Sweet Red</text><rect x="13.2" y="1007.4" width="39.1" height="12.3" fill="#b9b9b9"/><rect x="12.3" y="1006.5" width="39.1" height="12.3" fill="url(#dg)" stroke="#c9a882" stroke-width="0.6"/><text x="31.9" y="1012.1" text-anchor="middle" font-family="Liberation Sans, sans-serif" font-weight="bold" font-size="5" fill="#1a1a1a" textLength="15.0" lengthAdjust="spacingAndGlyphs">Tannic</text><rect x="70.6" y="1007.4" width="60.9" height="15.5" fill="#b9b9b9"/><rect x="69.7" y="1006.5" width="60.9" height="15.5" fill="url(#dg)" stroke="#c9a882" stroke-width="0.6"/><text x="100.2" y="1012.1" text-anchor="middle" font-family="Liberation Sans, sans-serif" font-weight="bold" font-size="5" fill="#1a1a1a" textLength="57.5" lengthAdjust="spacingAndGlyphs">Black Cherry, Raspberry</text><rect x="177.1" y="1001.4" width="36.4" height="11.5" fill="#b9b9b9"/><rect x="176.2" y="1000.5" width="36.4" height="11.5" fill="url(#dg)" stroke="#c9a882" stroke-width="0.6"/><text x="194.4" y="1006.1" text-anchor="middle" font-family="Liberation Sans, sans-serif" font-weight="bold" font-size="5" fill="#1a1a1a" textLength="10.0" lengthAdjust="spacingAndGlyphs">Soft</text><rect x="222.2" y="1004.1" width="34.2" height="11.0" fill="#b9b9b9"/><rect x="221.3" y="1003.2" width="34.2" height="11.0" fill="url(#dg)" stroke="#c9a882" stroke-width="0.6"/><text x="238.4" y="1008.8" text-anchor="middle" font-family="Liberation Sans, sans-serif" font-weight="bold" font-size="5" fill="#1a1a1a" textLength="30.0" lengthAdjust="spacingAndGlyphs">Petite Sirah</text><rect x="338.3" y="1001.4" width="33.4" height="10.6" fill="#b9b9b9"/><rect x="337.4" y="1000.5" width="33.4" height="10.6" fill="url(#dg)" stroke="#c9a882" stroke-width="0.6"/><text x="354.1" y="1006.1" text-anchor="middle" font-family="Liberation Sans, sans-serif" font-weight="bold" font-size="5" fill="#1a1a1a" textLength="15.0" lengthAdjust="spacingAndGlyphs">Freisa</text><rect x="125.2" y="1026.5" width="55.2" height="14.5" fill="#b9b9b9"/><rect x="124.3" y="1025.6" width="55.2" height="14.5" fill="url(#dg)" stroke="#c9a882" stroke-width="0.6"/><text x="151.9" y="1031.2" text-anchor="middle" font-family="Liberation Sans, sans-serif" font-weight="bold" font-size="5" fill="#1a1a1a" textLength="52.2" lengthAdjust="spacingAndGlyphs">Blueberry, Blackberry</text><rect x="198.2" y="1023.2" width="36.3" height="11.5" fill="#b9b9b9"/><rect x="197.3" y="1022.3" width="36.3" height="11.5" fill="url(#dg)" stroke="#c9a882" stroke-width="0.6"/><text x="215.4" y="1027.9" text-anchor="middle" font-family="Liberation Sans, sans-serif" font-weight="bold" font-size="5" fill="#1a1a1a" textLength="15.0" lengthAdjust="spacingAndGlyphs">Tannic</text><rect x="73.3" y="1032.5" width="30.9" height="9.9" fill="#b9b9b9"/><rect x="72.4" y="1031.6" width="30.9" height="9.9" fill="url(#dg)" stroke="#c9a882" stroke-width="0.6"/><text x="87.8" y="1037.2" text-anchor="middle" font-family="Liberation Sans, sans-serif" font-weight="bold" font-size="5" fill="#1a1a1a" textLength="22.5" lengthAdjust="spacingAndGlyphs">Zinfandel</text><rect x="22.2" y="1044.3" width="25.1" height="10.1" fill="#b9b9b9"/><rect x="21.3" y="1043.4" width="25.1" height="10.1" fill="url(#dg)" stroke="#c9a882" stroke-width="0.6"/><text x="33.9" y="1049.0" text-anchor="middle" font-family="Liberation Sans, sans-serif" font-weight="bold" font-size="5" fill="#1a1a1a" textLength="20.0" lengthAdjust="spacingAndGlyphs">Garnacha</text><rect x="64.3" y="1056.6" width="43.2" height="11.7" fill="#b9b9b9"/><rect x="63.4" y="1055.7" width="43.2" height="11.7" fill="url(#dg)" stroke="#c9a882" stroke-width="0.6"/><text x="85.0" y="1061.3" text-anchor="middle" font-family="Liberation Sans, sans-serif" font-weight="bold" font-size="5" fill="#1a1a1a" textLength="12.5" lengthAdjust="spacingAndGlyphs">Spicy</text><rect x="19.2" y="1068.3" width="36.3" height="12.1" fill="#b9b9b9"/><rect x="18.3" y="1067.4" width="36.3" height="12.1" fill="url(#dg)" stroke="#c9a882" stroke-width="0.6"/><text x="36.5" y="1073.0" text-anchor="middle" font-family="Liberation Sans, sans-serif" font-weight="bold" font-size="5" fill="#1a1a1a" textLength="10.0" lengthAdjust="spacingAndGlyphs">Soft</text><rect x="73.3" y="1077.6" width="52.5" height="14.5" fill="#b9b9b9"/><rect x="72.4" y="1076.7" width="52.5" height="14.5" fill="url(#dg)" stroke="#c9a882" stroke-width="0.6"/><text x="98.7" y="1082.3" text-anchor="middle" font-family="Liberation Sans, sans-serif" font-weight="bold" font-size="5" fill="#1a1a1a" textLength="45.0" lengthAdjust="spacingAndGlyphs">Strawberry, Cherry</text><rect x="149.3" y="1065.3" width="58.4" height="30.9" fill="#b9b9b9"/><rect x="148.4" y="1064.4" width="58.4" height="30.9" fill="url(#dg)" stroke="#c9a882" stroke-width="0.6"/><text x="177.6" y="1070.0" text-anchor="middle" font-family="Liberation Sans, sans-serif" font-weight="bold" font-size="5" fill="#1a1a1a" textLength="35.0" lengthAdjust="spacingAndGlyphs">Fruity Dry Red</text><rect x="222.2" y="1053.3" width="73.4" height="43.7" fill="#b9b9b9"/><rect x="221.3" y="1052.4" width="73.4" height="43.7" fill="url(#dg)" stroke="#c9a882" stroke-width="0.6"/><text x="258.0" y="1058.0" text-anchor="middle" font-family="Liberation Sans, sans-serif" font-weight="bold" font-size="5" fill="#1a1a1a" textLength="20.0" lengthAdjust="spacingAndGlyphs">Red Wine</text><rect x="326.0" y="1105.2" width="55.2" height="30.1" fill="#b9b9b9"/><rect x="325.1" y="1104.3" width="55.2" height="30.1" fill="url(#dg)" stroke="#c9a882" stroke-width="0.6"/><text x="352.7" y="1109.9" text-anchor="middle" font-family="Liberation Sans, sans-serif" font-weight="bold" font-size="5" fill="#1a1a1a" textLength="35.0" lengthAdjust="spacingAndGlyphs">Herbal Dry Red</text><rect x="28.2" y="1099.8" width="30.6" height="9.5" fill="#b9b9b9"/><rect x="27.3" y="1098.9" width="30.6" height="9.5" fill="url(#dg)" stroke="#c9a882" stroke-width="0.6"/><text x="42.6" y="1104.5" text-anchor="middle" font-family="Liberation Sans, sans-serif" font-weight="bold" font-size="5" fill="#1a1a1a" textLength="27.5" lengthAdjust="spacingAndGlyphs">St. Laurent</text><rect x="76.6" y="1102.5" width="27.6" height="9.5" fill="#b9b9b9"/><rect x="75.7" y="1101.6" width="27.6" height="9.5" fill="url(#dg)" stroke="#c9a882" stroke-width="0.6"/><text x="89.5" y="1107.2" text-anchor="middle" font-family="Liberation Sans, sans-serif" font-weight="bold" font-size="5" fill="#1a1a1a" textLength="12.5" lengthAdjust="spacingAndGlyphs">Gamay</text><rect x="22.2" y="1123.5" width="36.6" height="12.3" fill="#b9b9b9"/><rect x="21.3" y="1122.6" width="36.6" height="12.3" fill="url(#dg)" stroke="#c9a882" stroke-width="0.6"/><text x="39.6" y="1128.2" text-anchor="middle" font-family="Liberation Sans, sans-serif" font-weight="bold" font-size="5" fill="#1a1a1a" textLength="10.0" lengthAdjust="spacingAndGlyphs">Soft</text><rect x="70.6" y="1123.5" width="40.1" height="11.8" fill="#b9b9b9"/><rect x="69.7" y="1122.6" width="40.1" height="11.8" fill="url(#dg)" stroke="#c9a882" stroke-width="0.6"/><text x="89.8" y="1128.2" text-anchor="middle" font-family="Liberation Sans, sans-serif" font-weight="bold" font-size="5" fill="#1a1a1a" textLength="12.5" lengthAdjust="spacingAndGlyphs">Juicy</text><rect x="34.2" y="1147.6" width="58.2" height="15.0" fill="#b9b9b9"/><rect x="33.3" y="1146.7" width="58.2" height="15.0" fill="url(#dg)" stroke="#c9a882" stroke-width="0.6"/><text x="62.4" y="1152.3" text-anchor="middle" font-family="Liberation Sans, sans-serif" font-weight="bold" font-size="5" fill="#1a1a1a" textLength="55.0" lengthAdjust="spacingAndGlyphs">Tart Cherry, Cranberry</text><rect x="43.2" y="1238.3" width="65.6" height="43.1" fill="#b9b9b9"/><rect x="42.3" y="1237.4" width="65.6" height="43.1" fill="url(#dg)" stroke="#c9a882" stroke-width="0.6"/><text x="75.1" y="1243.0" text-anchor="middle" font-family="Liberation Sans, sans-serif" font-weight="bold" font-size="5" fill="#1a1a1a" textLength="25.0" lengthAdjust="spacingAndGlyphs">White Wine</text><rect x="149.3" y="1244.3" width="79.2" height="42.6" fill="#b9b9b9"/><rect x="148.4" y="1243.4" width="79.2" height="42.6" fill="url(#dg)" stroke="#c9a882" stroke-width="0.6"/><text x="188.0" y="1249.0" text-anchor="middle" font-family="Liberation Sans, sans-serif" font-weight="bold" font-size="5" fill="#1a1a1a" textLength="10.0" lengthAdjust="spacingAndGlyphs">Wine</text><rect x="52.3" y="1296.5" width="65.5" height="42.3" fill="#b9b9b9"/><rect x="51.4" y="1295.6" width="65.5" height="42.3" fill="url(#dg)" stroke="#c9a882" stroke-width="0.6"/><text x="84.2" y="1301.2" text-anchor="middle" font-family="Liberation Sans, sans-serif" font-weight="bold" font-size="5" fill="#1a1a1a" textLength="35.0" lengthAdjust="spacingAndGlyphs">Sparkling Wine</text><rect x="326.0" y="1272.4" width="57.4" height="39.1" fill="#b9b9b9"/><rect x="325.1" y="1271.5" width="57.4" height="39.1" fill="url(#dg)" stroke="#c9a882" stroke-width="0.6"/><text x="353.8" y="1277.1" text-anchor="middle" font-family="Liberation Sans, sans-serif" font-weight="bold" font-size="5" fill="#1a1a1a" textLength="22.5" lengthAdjust="spacingAndGlyphs">Rose Wine</text><rect x="329.3" y="1326.5" width="63.4" height="39.6" fill="#b9b9b9"/><rect x="328.4" y="1325.6" width="63.4" height="39.6" fill="url(#dg)" stroke="#c9a882" stroke-width="0.6"/><text x="360.1" y="1331.2" text-anchor="middle" font-family="Liberation Sans, sans-serif" font-weight="bold" font-size="5" fill="#1a1a1a" textLength="30.0" lengthAdjust="spacingAndGlyphs">Dessert Wine</text><path d="M80 968.6 L77.9375 971.9 H82.0625 Z" fill="#fff" stroke="#7a7a7a" stroke-width="0.7"/><path d="M127.6 971.8 L125.5375 975.0999999999999 H129.6625 Z" fill="#fff" stroke="#7a7a7a" stroke-width="0.7"/><path d="M167.2 968.6 L165.1375 971.9 H169.2625 Z" fill="#fff" stroke="#7a7a7a" stroke-width="0.7"/><path d="M202.2 993.1 L200.1375 996.4 H204.2625 Z" fill="#fff" stroke="#7a7a7a" stroke-width="0.7"/><path d="M302.5 963.1 L300.4375 966.4 H304.5625 Z" fill="#fff" stroke="#7a7a7a" stroke-width="0.7"/><path d="M322.1 978.1 L320.0375 981.4 H324.1625 Z" fill="#fff" stroke="#7a7a7a" stroke-width="0.7"/><path d="M337.2 1008.4 L333.9 1006.3375 V1010.4625 Z" fill="#fff" stroke="#7a7a7a" stroke-width="0.7"/><path d="M282.5 1025.3 L280.4375 1028.6 H284.5625 Z" fill="#fff" stroke="#7a7a7a" stroke-width="0.7"/><path d="M32.8 995.9 L30.737499999999997 999.1999999999999 H34.8625 Z" fill="#fff" stroke="#7a7a7a" stroke-width="0.7"/><path d="M85.5 995.1 L83.4375 998.4 H87.5625 Z" fill="#fff" stroke="#7a7a7a" stroke-width="0.7"/><path d="M42.3 1006.2 L40.2375 1002.9000000000001 H44.3625 Z" fill="#fff" stroke="#7a7a7a" stroke-width="0.7"/><path d="M120.2 996.7 L118.1375 1000.0 H122.2625 Z" fill="#fff" stroke="#7a7a7a" stroke-width="0.7"/><path d="M162.6 995.1 L160.5375 998.4 H164.6625 Z" fill="#fff" stroke="#7a7a7a" stroke-width="0.7"/><path d="M176 1005.1 L172.7 1003.0375 V1007.1625 Z" fill="#fff" stroke="#7a7a7a" stroke-width="0.7"/><path d="M212.6 1022 L210.5375 1018.7 H214.6625 Z" fill="#fff" stroke="#7a7a7a" stroke-width="0.7"/><path d="M229.5 1014.5 L227.4375 1017.8 H231.5625 Z" fill="#fff" stroke="#7a7a7a" stroke-width="0.7"/><path d="M111.2 1022.3 L109.1375 1025.6 H113.2625 Z" fill="#fff" stroke="#7a7a7a" stroke-width="0.7"/><path d="M151.6 1040.4 L149.5375 1043.7 H153.6625 Z" fill="#fff" stroke="#7a7a7a" stroke-width="0.7"/><path d="M83.9 1041.8 L81.8375 1045.1 H85.9625 Z" fill="#fff" stroke="#7a7a7a" stroke-width="0.7"/><path d="M36.3 1053.8 L34.2375 1057.1 H38.3625 Z" fill="#fff" stroke="#7a7a7a" stroke-width="0.7"/><path d="M54.9 1073.2 L58.199999999999996 1071.1375 V1075.2625 Z" fill="#fff" stroke="#7a7a7a" stroke-width="0.7"/><path d="M89.6 1067.7 L87.5375 1071.0 H91.6625 Z" fill="#fff" stroke="#7a7a7a" stroke-width="0.7"/><path d="M125.2 1082.5 L128.5 1080.4375 V1084.5625 Z" fill="#fff" stroke="#7a7a7a" stroke-width="0.7"/><path d="M207.1 1079.5 L210.4 1077.4375 V1081.5625 Z" fill="#fff" stroke="#7a7a7a" stroke-width="0.7"/><path d="M352.5 1104 L350.4375 1100.7 H354.5625 Z" fill="#fff" stroke="#7a7a7a" stroke-width="0.7"/><path d="M223.5 1096.4 L221.4375 1099.7 H225.5625 Z" fill="#fff" stroke="#7a7a7a" stroke-width="0.7"/><path d="M41.5 1108.7 L39.4375 1112.0 H43.5625 Z" fill="#fff" stroke="#7a7a7a" stroke-width="0.7"/><path d="M92.3 1111.4 L90.2375 1114.7 H94.3625 Z" fill="#fff" stroke="#7a7a7a" stroke-width="0.7"/><path d="M58.2 1128.1 L61.5 1126.0375 V1130.1625 Z" fill="#fff" stroke="#7a7a7a" stroke-width="0.7"/><path d="M69.4 1128.1 L66.10000000000001 1126.0375 V1130.1625 Z" fill="#fff" stroke="#7a7a7a" stroke-width="0.7"/><path d="M91.8 1154.6 L95.1 1152.5375 V1156.6625 Z" fill="#fff" stroke="#7a7a7a" stroke-width="0.7"/><path d="M108.2 1262 L111.5 1259.9375 V1264.0625 Z" fill="#fff" stroke="#7a7a7a" stroke-width="0.7"/><path d="M117.2 1335.2 L120.5 1333.1375 V1337.2625 Z" fill="#fff" stroke="#7a7a7a" stroke-width="0.7"/><path d="M328.1 1345.3 L324.8 1343.2375 V1347.3625 Z" fill="#fff" stroke="#7a7a7a" stroke-width="0.7"/><path d="M324.8 1303.5 L321.5 1301.4375 V1305.5625 Z" fill="#fff" stroke="#7a7a7a" stroke-width="0.7"/><text x="88.8" y="1074.7" font-family="Liberation Sans, sans-serif" font-size="4.5" fill="#333" textLength="39.5" lengthAdjust="spacingAndGlyphs">{complete, disjoint}</text><text x="63.6" y="1139" font-family="Liberation Sans, sans-serif" font-size="4.5" fill="#333" textLength="39.5" lengthAdjust="spacingAndGlyphs">{complete, disjoint}</text><text x="314.8" y="1101.8" font-family="Liberation Sans, sans-serif" font-size="4.5" fill="#333" textLength="49" lengthAdjust="spacingAndGlyphs">has herbal dry red  1..*</text><rect x="1.2" y="997.9" width="404.8" height="308.1" fill="none" stroke="#0a10e8" stroke-width="2.7"/><rect x="-5" y="993.6" width="8.8" height="8.8" fill="#0a10e8"/><rect x="401.6" y="993.6" width="8.8" height="8.8" fill="#0a10e8"/><rect x="-5" y="1301.6" width="8.8" height="8.8" fill="#0a10e8"/><rect x="401.6" y="1301.6" width="8.8" height="8.8" fill="#0a10e8"/><rect x="281.9" y="1299.5" width="14.6" height="14.6" fill="#fff" stroke="#0a10e8" stroke-width="2.5"/><rect x="288" y="1305.7" width="2.2" height="2.2" fill="#0a10e8"/></svg>
<div class="b" style="left:962px;top:66px;width:140px;height:1572px;background:#f4f4f4;border:1px solid #b4b4b4;"></div>
<div class="b" style="left:964px;top:68px;width:140px;height:1570px;background:#eeeeee;border-left:1px solid #fff;border-top:1px solid #fff;"></div>
<div class="b" style="left:982px;top:74px;width:130px;height:40px;background:#b5b5b5;"></div>
<div class="b" style="left:984px;top:76px;width:130px;height:38px;background:linear-gradient(to bottom,#dee1f5 0%,#c6d2f2 30%,#a3c2ef 47.5%,#62a5ec 50.5%,#84c6f4 75%,#b4f6ff 100%);"></div>
<div class="b" style="left:966px;top:113px;width:140px;height:1523px;background:#eeeeee;border:4px solid #0a42d6;border-right:none;"></div>
<div class="b" style="left:966px;top:117px;width:1.2px;height:1519px;background:#0a36b4;"></div>
<div class="b" style="left:966px;top:1634.6px;width:140px;height:1.4px;background:#0a36b4;"></div>
<div class="b" style="left:963px;top:68px;width:3px;height:1568px;background:#fcfcfc;"></div>
<div class="b" style="left:962px;top:1636px;width:140px;height:1px;background:#8e8e8e;"></div>
<div class="b" style="left:962px;top:1637px;width:140px;height:1.6px;background:#fbfbfb;"></div>
<span class="t" style="left:1034.82px;top:83px;font-size:23px;line-height:23px;color:#111;font-weight:bold;transform:scaleX(0.8597);-webkit-text-stroke:0.2px;">Example</span>
<div class="b" style="left:974px;top:172px;width:130px;height:36px;background:linear-gradient(to bottom,#ffffff 0%,#f2f2f2 12%,#d6d6d6 50%,#a4a4a4 100%);"></div>
<span class="t" style="left:973.48px;top:179px;font-size:25.5px;line-height:25.5px;color:#000;transform:scaleX(1.0977);">Selection</span>
<div class="b" style="left:974px;top:208px;width:44px;height:44px;background:linear-gradient(to bottom,#858585 0,#9a9a9a 4px,#9b9b9b 100%);border-radius:6px;"></div>
<div class="b" style="left:974px;top:258px;width:130px;height:36px;background:linear-gradient(to bottom,#ffffff 0%,#f2f2f2 12%,#d6d6d6 50%,#a4a4a4 100%);"></div>
<span class="t" style="left:974.71px;top:265px;font-size:25.5px;line-height:25.5px;color:#000;transform:scaleX(1.1409);">Tools</span>
<div class="b" style="left:974px;top:344px;width:130px;height:36px;background:linear-gradient(to bottom,#ffffff 0%,#f2f2f2 12%,#d6d6d6 50%,#a4a4a4 100%);"></div>
<span class="t" style="left:973.47px;top:351px;font-size:25.5px;line-height:25.5px;color:#000;transform:scaleX(1.1118);">Concept Modeler</span>
<span class="t" style="left:1019.61px;top:389px;font-size:27.3px;line-height:27.3px;color:#1a1a1a;transform:scaleX(1.0432);-webkit-text-stroke:0.35px;">Literal</span>
<span class="t" style="left:1019.60px;top:433px;font-size:27.3px;line-height:27.3px;color:#1a1a1a;transform:scaleX(1.0470);-webkit-text-stroke:0.35px;">Note(HTML)</span>
<span class="t" style="left:1020.02px;top:477px;font-size:27.3px;line-height:27.3px;color:#1a1a1a;transform:scaleX(1.0090);-webkit-text-stroke:0.35px;">Anchor</span>
<span class="t" style="left:1019.74px;top:521px;font-size:27.3px;line-height:27.3px;color:#1a1a1a;transform:scaleX(0.9725);-webkit-text-stroke:0.35px;">Class</span>
<span class="t" style="left:1020.02px;top:565px;font-size:27.3px;line-height:27.3px;color:#1a1a1a;transform:scaleX(1.0079);-webkit-text-stroke:0.35px;">Anything</span>
<span class="t" style="left:1020.02px;top:609px;font-size:27.3px;line-height:27.3px;color:#1a1a1a;transform:scaleX(1.0180);-webkit-text-stroke:0.35px;">Anonymous Class</span>
<span class="t" style="left:1020.02px;top:653px;font-size:27.3px;line-height:27.3px;color:#1a1a1a;transform:scaleX(1.0197);-webkit-text-stroke:0.35px;">Assoc</span>
<span class="t" style="left:1019.87px;top:697px;font-size:27.3px;line-height:27.3px;color:#1a1a1a;transform:scaleX(0.9060);-webkit-text-stroke:0.35px;">Enumeration</span>
<span class="t" style="left:1019.51px;top:741px;font-size:27.3px;line-height:27.3px;color:#1a1a1a;transform:scaleX(1.0920);-webkit-text-stroke:0.35px;">Inverse Property</span>
<span class="t" style="left:1019.57px;top:785px;font-size:27.3px;line-height:27.3px;color:#1a1a1a;transform:scaleX(1.0632);-webkit-text-stroke:0.35px;">Unidirectional Property</span>
<span class="t" style="left:1019.72px;top:829px;font-size:27.3px;line-height:27.3px;color:#1a1a1a;transform:scaleX(0.9858);-webkit-text-stroke:0.35px;">Subclass</span>
<span class="t" style="left:1019.66px;top:873px;font-size:27.3px;line-height:27.3px;color:#1a1a1a;transform:scaleX(1.0155);-webkit-text-stroke:0.35px;">Equivalent Class</span>
<span class="t" style="left:1019.73px;top:917px;font-size:27.3px;line-height:27.3px;color:#1a1a1a;transform:scaleX(0.9760);-webkit-text-stroke:0.35px;">Property Chain</span>
<span class="t" style="left:1019.73px;top:961px;font-size:27.3px;line-height:27.3px;color:#1a1a1a;transform:scaleX(0.9839);-webkit-text-stroke:0.35px;">Complete</span>
<span class="t" style="left:1019.63px;top:1005px;font-size:27.3px;line-height:27.3px;color:#1a1a1a;transform:scaleX(1.0310);-webkit-text-stroke:0.35px;">Disjoint</span>
<span class="t" style="left:1019.64px;top:1049px;font-size:27.3px;line-height:27.3px;color:#1a1a1a;transform:scaleX(1.0266);-webkit-text-stroke:0.35px;">Dependency</span>
<svg class="b" style="left:0;top:0" width="1098" height="1100" viewBox="0 0 1098 1100"><defs><linearGradient id="gr1" x1="0" x2="0" y1="0" y2="1"><stop offset="0" stop-color="#8d8d9a"/><stop offset="0.5" stop-color="#d8d8e2"/><stop offset="1" stop-color="#9a9aa6"/></linearGradient>
<linearGradient id="wg" x1="0" x2="1" y1="0" y2="1"><stop offset="0" stop-color="#ffffff"/><stop offset="1" stop-color="#dcdcdc"/></linearGradient></defs><path d="M995 79 H1018.5 L1025.5 86 V109 H995 Z" fill="#fbfbfb" stroke="#8a8a8a" stroke-width="1.2"/><path d="M1018.5 79 V86 H1025.5" fill="#e8e8e8" stroke="#8a8a8a" stroke-width="1"/><path d="M1010.5 91.5 V96 M1002 99.5 V96 H1019 V99.5" fill="none" stroke="#444" stroke-width="1.3"/><rect x="1005.5" y="85" width="10" height="6.5" fill="url(#gr1)" stroke="#444" stroke-width="1.2"/><rect x="998.5" y="99.5" width="9" height="6.2" fill="url(#gr1)" stroke="#444" stroke-width="1.2"/><rect x="1013" y="99.5" width="9" height="6.2" fill="url(#gr1)" stroke="#444" stroke-width="1.2"/><path d="M983.5 141.6 L997.5 127.8 L1001.5 132.3 L996.3 137.5 H1008 V145.7 H996.3 L1001.5 151 L997.5 155.4 Z" fill="#c3c3c3"/><path d="M1052 141.6 L1038 127.8 L1034 132.3 L1039.2 137.5 H1027.5 V145.7 H1039.2 L1034 151 L1038 155.4 Z" fill="#c3c3c3"/><rect x="1075" y="127.5" width="6" height="2" fill="#b4b4b4"/><rect x="1075" y="131.5" width="6" height="2" fill="#b4b4b4"/><rect x="1075" y="135.5" width="6" height="2" fill="#b4b4b4"/><rect x="1075" y="139.5" width="6" height="2" fill="#b4b4b4"/><rect x="1075" y="143.5" width="6" height="2" fill="#b4b4b4"/><rect x="1075" y="147.5" width="6" height="2" fill="#b4b4b4"/><rect x="1075" y="151.5" width="6" height="2" fill="#b4b4b4"/><rect x="1075" y="155.5" width="6" height="2" fill="#b4b4b4"/><path d="M1099 128.8 H1094.6 V137.5 H1099" fill="#fff" stroke="#333" stroke-width="1.5"/><path d="M988.4 218 V234.4 L993.8 230.6 L1000.6 228.4 Z" fill="#fff" stroke="#444" stroke-width="1.6" stroke-linejoin="miter"/><path d="M994.6 230.5 L1000.4 241.6" stroke="#444" stroke-width="2.6"/><rect x="1027.2" y="216.2" width="17.8" height="17" fill="none" stroke="#555" stroke-width="1.1" stroke-dasharray="2.6 2"/><rect x="1031.3" y="219.8" width="10.2" height="10" fill="url(#wg)" stroke="#777" stroke-width="1.5"/><path d="M1046.6 234.6 V243.5 L1049 241.6 L1051 245.4 L1052.6 244.6 L1050.8 240.8 L1053.4 240.6 Z" fill="#fff" stroke="#333" stroke-width="1"/><rect x="1070.8" y="216.8" width="30" height="26.4" fill="none" stroke="#333" stroke-width="1.2" stroke-dasharray="3.4 2"/><rect x="1074.6" y="220.6" width="6.2" height="6.2" fill="#fff" stroke="#333" stroke-width="1.2"/><rect x="1087.6" y="220.6" width="6.2" height="6.2" fill="#fff" stroke="#333" stroke-width="1.2"/><rect x="1074.6" y="233.6" width="6.2" height="6.2" fill="#fff" stroke="#333" stroke-width="1.2"/><rect x="1087.6" y="233.6" width="6.2" height="6.2" fill="#fff" stroke="#333" stroke-width="1.2"/><path d="M992 313 Q989.8 308 991.2 305.5 Q993 302.5 996 302.5 Q999 302.5 1000.8 305.5 Q1002.2 308 1000 313 L999.3 320.5 H1003 Q1007 321.5 1008.6 326 H983.4 Q985 321.5 989 320.5 H992.7 Z" fill="#fafafa" stroke="#444" stroke-width="1.3"/><rect x="983" y="326" width="26" height="4.8" fill="#444"/><path d="M1039.8 302 L1045.6 307.8 H1042.3 V312 H1037.3 V307.8 H1034 Z" fill="#fff" stroke="#444" stroke-width="1.2"/><rect x="1027.6" y="311.6" width="24.8" height="3.4" fill="#bdbdbd" stroke="#555" stroke-width="1"/><rect x="1027.2" y="317.6" width="25.6" height="4.4" fill="#444"/><path d="M1033 324.5 H1046.6 L1039.8 331.3 Z" fill="#444"/><rect x="1071" y="301.4" width="26" height="4.4" fill="#444"/><path d="M1077.5 308.5 H1091.5 L1084.5 315.5 Z" fill="#444"/><rect x="1082.4" y="305" width="4.2" height="4.5" fill="#444"/><path d="M1084.5 318 L1090.3 323.8 H1087 V327.4 H1082 V323.8 H1078.7 Z" fill="#fff" stroke="#444" stroke-width="1.2"/><rect x="1071.4" y="327.2" width="25.4" height="3.4" fill="#bdbdbd" stroke="#555" stroke-width="1"/><path d="M982.4 395 H1003.6 L1010.4 400.4 V410.6 H982.4 Z" fill="#f8f8f8" stroke="#444" stroke-width="1.3"/><path d="M1003.6 395 V400.4 H1010.4" fill="none" stroke="#444" stroke-width="1.3"/><path d="M984.6 434.8 H1001.5 L1007.2 439.6 V447 H984.6 Z" fill="#fafafa" stroke="#444" stroke-width="1.2"/><path d="M1001.5 434.8 V439.6 H1007.2" fill="none" stroke="#444" stroke-width="1.1"/><path d="M987.5 438.2 H998.5 M987.5 441 H1003.5 M987.5 443.8 H1003.5" stroke="#444" stroke-width="1.1"/><text x="983.2" y="457.3" font-family="Liberation Sans, sans-serif" font-weight="bold" font-size="7.6" fill="#333" textLength="25.6" lengthAdjust="spacingAndGlyphs">HTML</text><rect x="996.4" y="479" width="11.6" height="11" fill="#fafafa" stroke="#444" stroke-width="1.1"/><path d="M999 482.6 H1005.6 M999 485 H1005.6 M999 487.4 H1005.6" stroke="#444" stroke-width="1"/><path d="M996 490.5 L984.4 502.6" stroke="#444" stroke-width="1.2" stroke-dasharray="2.4 2"/><rect x="982.75" y="522.75" width="27.5" height="22.5" fill="url(#cg)" stroke="#555" stroke-width="1.5"/><path d="M980.8 537.8 H1010.5 M980.8 541.6 H1010.5" stroke="#555" stroke-width="1.3" fill="none"/><rect x="982.75" y="566.75" width="27.5" height="22.5" fill="url(#cg)" stroke="#555" stroke-width="1.5"/><path d="M980.8 581.8 H1010.5 M980.8 585.6 H1010.5" stroke="#555" stroke-width="1.3" fill="none"/><rect x="982.75" y="610.75" width="27.5" height="22.5" fill="url(#cg)" stroke="#555" stroke-width="1.5"/><path d="M980.8 625.8 H1010.5 M980.8 629.6 H1010.5" stroke="#555" stroke-width="1.3" fill="none"/><path d="M984 653.8 H1008.6 M995.4 652 V662" stroke="#444" stroke-width="1.2"/><rect x="984.6" y="662.2" width="23" height="16" fill="url(#cg)" stroke="#555" stroke-width="1.4"/><path d="M984 670.6 H1008.6 M984 674.4 H1008.6" stroke="#555" stroke-width="1.2"/><rect x="984.6" y="700.8" width="23" height="17" fill="url(#cg)" stroke="#555" stroke-width="1.4"/><path d="M1003 704.4 H997.4 V714.4 H1003 M997.4 709.2 H1002.2" fill="none" stroke="#444" stroke-width="1.3"/><path d="M984.6 764.6 L1006.6 743" stroke="#3b4cc0" stroke-width="2.4"/><path d="M985.4 808.2 L1007.6 787" stroke="#3b4cc0" stroke-width="1.8" fill="none" /><path d="M999.2 787.8 L1007.6 787 L1006.8000000000001 795.4" fill="none" stroke="#3b4cc0" stroke-width="2.6" stroke-linejoin="miter"/><path d="M991 846.4 L1002.4 835.2" stroke="#3b4cc0" stroke-width="1.2"/><path d="M1007.8 830 L1006.6 838.4 L999.6 831.2 Z" fill="#eeeeee" stroke="#3b4cc0" stroke-width="1.2"/><rect x="983" y="846.6" width="9.6" height="9.6" fill="#f8f8f8"/><path d="M982.6 846.6 H992.6 V856.4" fill="none" stroke="#444" stroke-width="1.1"/><path d="M990.6 891.6 L1001.8 880.6" stroke="#3b4cc0" stroke-width="2.3"/><path d="M1009.8 872.6 L1008.6 884.4 L998 873.8 Z" fill="#eeeeee" stroke="#3b4cc0" stroke-width="1.7"/><path d="M982.6 899.4 L983.8 887.6 L994.4 898.2 Z" fill="#eeeeee" stroke="#3b4cc0" stroke-width="1.7"/><path d="M985.4 940.2 L1007.6 919" stroke="#3b4cc0" stroke-width="1.8" fill="none" /><path d="M999.2 919.8 L1007.6 919 L1006.8000000000001 927.4" fill="none" stroke="#3b4cc0" stroke-width="2.6" stroke-linejoin="miter"/><ellipse cx="985.6" cy="922.6" rx="2.6" ry="1.7" fill="none" stroke="#3b4cc0" stroke-width="1.2"/><ellipse cx="992.6" cy="922.6" rx="2.6" ry="1.7" fill="none" stroke="#3b4cc0" stroke-width="1.2"/><path d="M983.0 983.6 H986.4 M987.2 979.4 H990.6 M991.4 975.2 H994.8 M995.6 971.0 H999.0 M999.8 966.8000000000001 H1003.1999999999999 " stroke="#3b4cc0" stroke-width="1.8" fill="none"/><path d="M984 982.4 L1003 964.1" stroke="#3b4cc0" stroke-width="1.1" stroke-dasharray="2 2.2" fill="none"/><path d="M1001.0 962.0 L1007.4 961.4 L1006.8 967.8" fill="none" stroke="#3b4cc0" stroke-width="2.2" stroke-linejoin="miter"/><path d="M1005.6 977.6 H1000.4 V985.2 H1005.6" fill="none" stroke="#444" stroke-width="1.5"/><path d="M983.0 1027.6 H986.4 M987.2 1023.3999999999999 H990.6 M991.4 1019.1999999999999 H994.8 M995.6 1014.9999999999999 H999.0 M999.8 1010.8 H1003.1999999999999 " stroke="#3b4cc0" stroke-width="1.8" fill="none"/><path d="M984 1026.3999999999999 L1003 1008.0999999999999" stroke="#3b4cc0" stroke-width="1.1" stroke-dasharray="2 2.2" fill="none"/><path d="M1001.0 1006.0 L1007.4 1005.4 L1006.8 1011.8" fill="none" stroke="#3b4cc0" stroke-width="2.2" stroke-linejoin="miter"/><path d="M1005.4 1022.6 V1030.4 H1007 Q1009.4 1030.4 1009.4 1026.5 Q1009.4 1022.6 1007 1022.6 Z" fill="none" stroke="#333" stroke-width="1.4"/><path d="M984.6 1072 L1003 1054" stroke="#3b4cc0" stroke-width="2.2" stroke-dasharray="4.6 3" fill="none"/><path d="M1000.6 1050.6 L1007.6 1050 L1007.0 1057" fill="none" stroke="#3b4cc0" stroke-width="2.2" stroke-linejoin="miter"/></svg>
<div class="b" style="left:0px;top:1689px;width:1098px;height:1px;background:#acacac;"></div>
<div class="b" style="left:0px;top:1690px;width:1098px;height:2px;background:#bebebe;"></div>
<div class="b" style="left:0px;top:1692px;width:1098px;height:32px;background:linear-gradient(to bottom,#e8e8e8 0%,#dcdcdc 50%,#d0d0d0 100%);"></div>
<div class="b" style="left:14px;top:1650px;width:273px;height:38px;background:#b5b5b5;"></div>
<div class="b" style="left:16px;top:1652px;width:270px;height:36px;background:linear-gradient(to bottom,#dee1f5 0%,#c6d2f2 30%,#a3c2ef 47.5%,#62a5ec 50.5%,#84c6f4 75%,#b4f6ff 100%);"></div>
<div class="b" style="left:16px;top:1688px;width:270px;height:2px;background:#0a3fd0;"></div>
<span class="t" style="left:64.29px;top:1659px;font-size:23.5px;line-height:23.5px;color:#111;transform:scaleX(1.0368);-webkit-text-stroke:0.25px;">Notification Window</span>
<div class="b" style="left:25px;top:1697px;width:20px;height:20px;background:#d7d7d7;border-radius:50%;border:1px solid #bcbcbc;"></div>
<div class="b" style="left:59px;top:1697px;width:20px;height:20px;background:#d7d7d7;border-radius:50%;border:1px solid #bcbcbc;"></div>
<div class="b" style="left:93px;top:1697px;width:20px;height:20px;background:#d7d7d7;border-radius:50%;border:1px solid #bcbcbc;"></div>
<div class="b" style="left:40px;top:1768px;width:1070px;height:120px;background:#fff;border:4px solid #0a42d6;border-left-width:5px;"></div>
<div class="b" style="left:44px;top:1772px;width:1060px;height:2px;background:#7d7d7d;"></div>
<div class="b" style="left:44px;top:1772px;width:2px;height:110px;background:#8a8a8a;"></div>
<span class="t" style="left:47.99px;top:1779px;font-size:25px;line-height:25px;color:#777;transform:scaleX(1.1473);-webkit-text-stroke:0.2px;">[2019.10.07::14:28:14]</span>
<span class="t" style="left:47.99px;top:1808px;font-size:25px;line-height:25px;color:#777;transform:scaleX(1.1473);-webkit-text-stroke:0.2px;">[2019.10.07::14:28:14]</span>
<span class="t" style="left:348.24px;top:1779px;font-size:25px;line-height:25px;color:#000;transform:scaleX(1.0289);-webkit-text-stroke:0.3px;">The IRIs for the following elements were successfully unfrozen:</span>
<span class="t" style="left:347.74px;top:1808px;font-size:25px;line-height:25px;color:#0000ee;transform:scaleX(1.0566);-webkit-text-stroke:0.3px;text-decoration:underline;text-decoration-thickness:1.8px;text-underline-offset:3px;">Varieties of Wine::Tart Cherry, Cranberry</span>
<div class="b" style="left:4px;top:1776px;width:36px;height:98px;background:#b5b5b5;"></div>
<div class="b" style="left:38.3px;top:1776px;width:3px;height:100px;background:#0a42d6;"></div>
<div class="b" style="left:5.6px;top:1778px;width:32.7px;height:95.4px;background:linear-gradient(to right,#dee1f5 0%,#c6d2f2 30%,#a3c2ef 47.5%,#62a5ec 50.5%,#84c6f4 75%,#b4f6ff 100%);"></div>
<span class="t" style="left:30px;top:1864.5px;font-size:22.5px;line-height:22.5px;height:22.5px;font-weight:bold;color:#111;transform-origin:0 0;transform:rotate(-90deg) translateY(-19.05px) scaleX(1.02);-webkit-text-stroke:0.2px">Project</span>
<svg class="b" style="left:0;top:1640px" width="300" height="236" viewBox="0 1640 300 236"><defs><linearGradient id="envG" x1="0" x2="0" y1="0" y2="1"><stop offset="0" stop-color="#bcbcbc"/><stop offset="0.7" stop-color="#fafafa"/><stop offset="1" stop-color="#fff"/></linearGradient><linearGradient id="clkG" x1="0" x2="1" y1="0" y2="0"><stop offset="0" stop-color="#fcd9a8"/><stop offset="1" stop-color="#fff0dc"/></linearGradient></defs><rect x="26.8" y="1661" width="27.4" height="16.6" fill="#fff" stroke="#333" stroke-width="1.6"/><path d="M27 1661.2 L37.5 1669.6 H43.5 L54 1661.2 M27.4 1677.2 L37.5 1669.6 M43.5 1669.6 L53.8 1677.2" fill="none" stroke="#333" stroke-width="1.5"/><path d="M12.5 1755.5 L30.5 1737.5" stroke="#a9a9a9" stroke-width="3.4"/><circle cx="30.6" cy="1737.6" r="3.6" fill="#a9a9a9"/><circle cx="12.6" cy="1755.6" r="3" fill="#a9a9a9"/><rect x="30.6" y="1732.5" width="3.4" height="4" fill="#eeeeee" transform="rotate(45 30.6 1737.6)"/><circle cx="11.8" cy="1756.4" r="1.3" fill="#eeeeee"/><path d="M9 1742.4 L16.5 1736.2 H25 L19 1745.8 L14.6 1742.6 L12 1745.6 Z" fill="#444"/><path d="M18 1742.4 L33 1757.4" stroke="#444" stroke-width="4.4"/><path d="M19.5 1743.9 L32.6 1757" stroke="#4a78d0" stroke-width="1.4"/><path d="M66.3 1743.6 L77 1753.6 H71 V1760.4 H61.6 V1753.6 H55.6 Z" fill="#f8f8f8" stroke="#111" stroke-width="1.5" stroke-linejoin="miter"/><path d="M54.8 1742.6 L66.3 1732.6 L77.8 1742.6 L74.4 1746.2 L66.3 1739.2 L58.2 1746.2 Z" fill="#f8f8f8" stroke="#111" stroke-width="1.5" stroke-linejoin="miter"/><path d="M105 1732.2 H115 V1740 H121.4 L110 1749.6 L98.6 1740 H105 Z" fill="#c6c6c6"/><path d="M98.4 1750 L102 1746.4 L110 1753.4 L118 1746.4 L121.6 1750 L110 1760.2 Z" fill="#c6c6c6"/><rect x="140.6" y="1734.8" width="27" height="16.6" fill="url(#envG)" stroke="#444" stroke-width="1.5"/><path d="M140.6 1734.8 L150.6 1743.2 H157.6 L167.6 1734.8 M143.6 1751.3999999999999 L150.6 1743.2" fill="none" stroke="#444" stroke-width="1.3"/><path d="M158.4 1750 V1748.6 Q158.4 1744.4 161.6 1744.4 Q164.8 1744.4 164.8 1748.6 V1750" fill="none" stroke="#111" stroke-width="1.8"/><rect x="156.2" y="1749.6" width="10.8" height="9.4" rx="2" fill="#fff" stroke="#111" stroke-width="1.8"/><circle cx="161.6" cy="1753.4" r="1.3" fill="#111"/><rect x="160.9" y="1753.6" width="1.4" height="3" fill="#111"/><rect x="185.4" y="1734.8" width="26" height="15.4" fill="url(#envG)" stroke="#444" stroke-width="1.5"/><path d="M185.4 1734.8 L194.9 1743.2 H201.9 L211.4 1734.8 M188.4 1750.2 L194.9 1743.2" fill="none" stroke="#444" stroke-width="1.3"/><g transform="rotate(-31 201.5 1752)"><rect x="191.8" y="1747.6" width="19.6" height="8.8" rx="1.2" fill="#e6e6e6" stroke="#444" stroke-width="1.5"/><rect x="202" y="1748.3" width="8.8" height="7.4" fill="#3d82c8"/><rect x="192.6" y="1748.4" width="3.4" height="7.2" fill="#fff"/></g><rect x="228.6" y="1734.8" width="27.6" height="18.6" fill="#fafafa" stroke="#b0b0b0" stroke-width="1.5"/><path d="M228.6 1734.8 L238.9 1743.2 H245.9 L256.2 1734.8 M231.6 1753.3999999999999 L238.9 1743.2" fill="none" stroke="#b0b0b0" stroke-width="1.3"/><circle cx="246.7" cy="1752" r="7.4" fill="url(#clkG)" stroke="#444" stroke-width="1.5"/><path d="M246.7 1746.8 V1752.2 H250.6" fill="none" stroke="#444" stroke-width="1.5"/></svg>
</body></html>
